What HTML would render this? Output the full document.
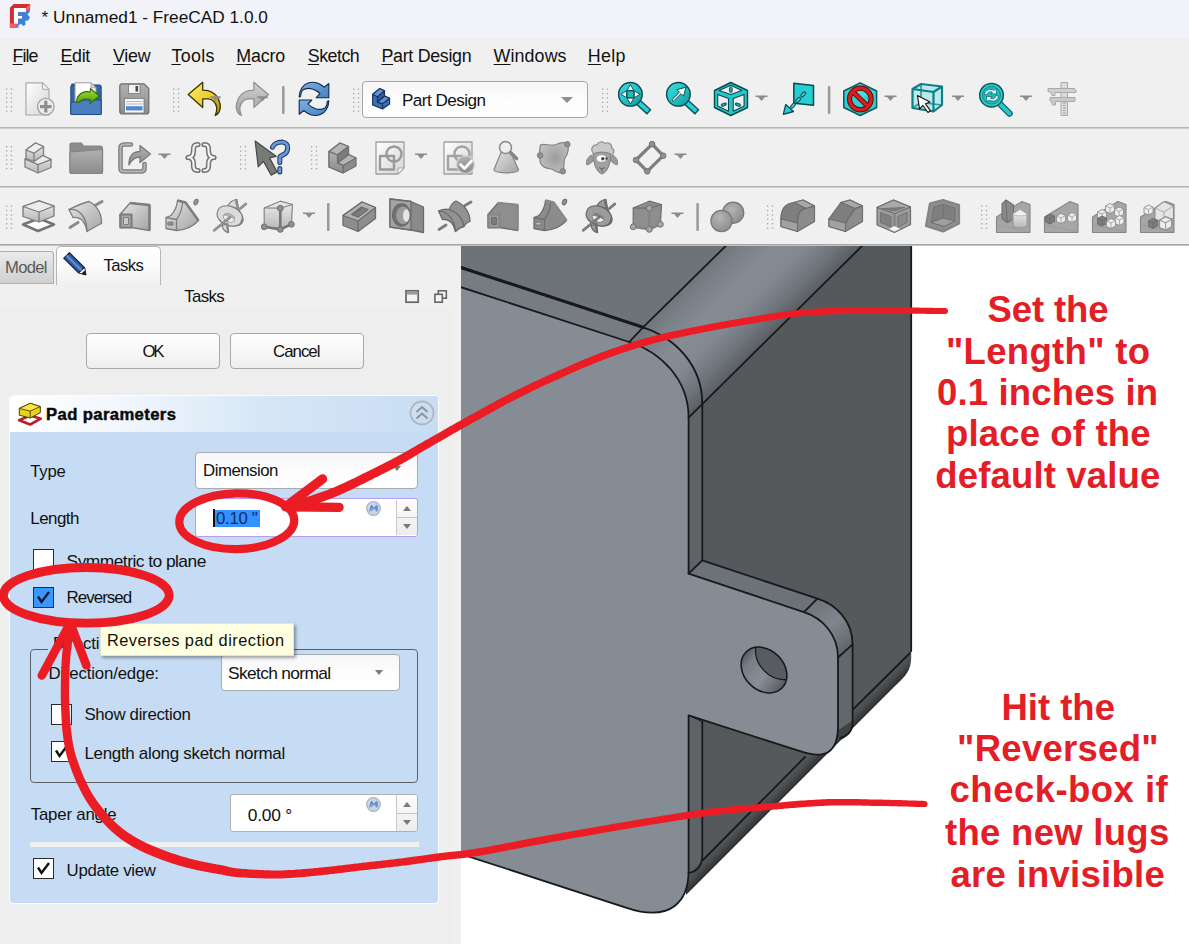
<!DOCTYPE html>
<html lang="en">
<head>
<meta charset="utf-8">
<title>* Unnamed1 - FreeCAD 1.0.0</title>
<style>
html,body{margin:0;padding:0;}
body{width:1189px;height:944px;position:relative;overflow:hidden;background:#f0f0f0;font-family:"Liberation Sans",sans-serif;color:#000;}
.abs{position:absolute;}
.t{position:absolute;white-space:nowrap;color:#111;}
.t u{text-decoration:underline;text-decoration-thickness:1.3px;text-underline-offset:2.2px;}
#titlebar{left:0;top:0;width:1189px;height:38px;background:#f1f3f9;}
#menubar{left:0;top:38px;width:1189px;height:38px;background:#f0f0f0;}
.hline{position:absolute;left:0;width:1189px;height:2px;background:linear-gradient(#b4b4b4,#b4b4b4 60%,#fafafa);}
.vsep{position:absolute;width:2px;height:30px;background:#9a9a9a;border-radius:1px;}
.combo{position:absolute;box-sizing:border-box;border:1px solid #adadad;border-radius:4px;background:linear-gradient(#f6f6f6,#fdfdfd 55%,#ffffff);}
.btn{position:absolute;box-sizing:border-box;border:1px solid #a9a9a9;border-radius:4px;background:linear-gradient(#fefefe,#f6f6f6 60%,#ededed);}
.cb{position:absolute;box-sizing:border-box;width:21px;height:21px;border:1.5px solid #2b2b2b;background:#fff;}
.spin{position:absolute;box-sizing:border-box;background:#fff;border:1px solid #b0b0b0;border-radius:3px;}
.dd{position:absolute;width:0;height:0;border-left:4px solid transparent;border-right:4px solid transparent;border-top:5px solid #7a7a7a;}
</style>
</head>
<body>

<svg class="abs" style="left:0;top:0" width="1189" height="944" viewBox="0 0 1189 944">
<defs>
<clipPath id="vclip"><rect x="461" y="246" width="728" height="698"/></clipPath>
<linearGradient id="gFillet" gradientUnits="userSpaceOnUse" x1="700" y1="270.3" x2="768" y2="338.3">
<stop offset="0" stop-color="#6f757b"/><stop offset="0.15" stop-color="#7a8087"/><stop offset="0.4" stop-color="#868c94"/><stop offset="0.62" stop-color="#828890"/><stop offset="0.85" stop-color="#6c7278"/><stop offset="1" stop-color="#5a5f63"/>
</linearGradient>
<linearGradient id="gBand" gradientUnits="userSpaceOnUse" x1="800" y1="763" x2="809" y2="772">
<stop offset="0" stop-color="#55595c"/><stop offset="0.5" stop-color="#45494c"/><stop offset="1" stop-color="#2c2f31"/>
</linearGradient>
<linearGradient id="gHole" gradientUnits="userSpaceOnUse" x1="741" y1="652" x2="788" y2="688" gradientTransform="rotate(-45 764 670)">
<stop offset="0" stop-color="#4a4e52"/><stop offset="0.22" stop-color="#787e85"/><stop offset="0.55" stop-color="#898f97"/><stop offset="0.82" stop-color="#666b70"/><stop offset="1" stop-color="#484c50"/>
</linearGradient>
<linearGradient id="gLugC" gradientUnits="userSpaceOnUse" x1="815" y1="605" x2="850" y2="650">
<stop offset="0" stop-color="#70767c"/><stop offset="0.45" stop-color="#7f858c"/><stop offset="1" stop-color="#5f6468"/>
</linearGradient>
<clipPath id="holeclip"><ellipse cx="764" cy="670" rx="25.4" ry="20" transform="rotate(45 764 670)"/></clipPath>
</defs>
<rect x="461" y="246" width="728" height="698" fill="#ffffff"/>
<g clip-path="url(#vclip)" stroke-linejoin="round" stroke-linecap="round">
<!-- right face + bottom band silhouette -->
<path d="M862,246 L911.2,246 L911.2,657 C911.2,670 906,676 895.5,685.5 L686,895 L688,404 Z" fill="url(#gBand)"/>
<path d="M862,246 L911.2,246 L911.2,651 L910,653 L703,860 L703,404 Z" fill="#55595c"/>
<!-- top face -->
<path d="M461,246 L725.7,246 L643,327.3 L461,267.5 Z" fill="#6d7378"/>
<!-- chamfer strip -->
<path d="M461,267.5 L643,327.3 L629.2,342 L461,287.2 Z" fill="#767c82"/>
<!-- fillet cylinder -->
<path d="M725.7,246 L862,246 L688.6,417.7 C688.6,380 662,352.7 629.2,342 L643,327.3 Z" fill="url(#gFillet)"/>
<!-- right vertical strip -->
<path d="M688.6,417.7 L702.3,403.8 L702.3,860 L688.6,875 Z" fill="#5e6367"/>
<!-- front face -->
<path d="M461,287.2 L629.2,342 C662,352.7 688.6,380 688.6,417.7 L688.6,573.7 L803.9,612.1 C822,618 838,634 838,657.5 L838,726 C838,752 826,760 800,751.2 L688.6,715.3 L688.6,871 C688.6,900 672,923 626.6,907.8 L461,854 Z" fill="#868c94"/>
<!-- lug top surface -->
<path d="M688.6,573.7 L803.9,612.1 L817.5,598.7 L702.3,560.4 Z" fill="#6c7277"/>
<!-- lug corner fillet -->
<path d="M803.9,612.1 C822,618 838,634 838,657.5 L852.6,644.3 C852.6,621 836,604.5 817.5,598.7 Z" fill="url(#gLugC)"/>
<!-- lug right strip -->
<path d="M838,657.5 L852.6,644.3 L852.6,720.4 L838,730.5 Z" fill="#62676b"/>
<path d="M838,730.500 L852.600,720.400 C852.600,729 849,735.500 841.500,739.500 L836,741 Z" fill="#3f4346"/>
<!-- hole -->
<ellipse cx="764" cy="670" rx="25.4" ry="20" transform="rotate(45 764 670)" fill="url(#gHole)"/>
<g clip-path="url(#holeclip)"><ellipse cx="778.4" cy="656.7" rx="25.4" ry="20" transform="rotate(45 778.4 656.7)" fill="#585c60" stroke="#16181a" stroke-width="1.3"/></g>
<ellipse cx="764" cy="670" rx="25.4" ry="20" transform="rotate(45 764 670)" fill="none" stroke="#16181a" stroke-width="1.5"/>
<!-- edges -->
<g fill="none" stroke="#17191b" stroke-width="1.8">
<path d="M461,267.5 L643,327.3" stroke-width="3.1"/>
<path d="M461,287.2 L629.2,342 C662,352.7 688.6,380 688.6,417.7 L688.6,573.7 L803.9,612.1 C822,618 838,634 838,657.5 L838,726 C838,752 826,760 800,751.2 L688.6,715.3 L688.6,871 C688.6,900 672,923 626.6,907.8 L461,854"/>
<path d="M629.2,342 L643,327.3 L725.7,246"/>
<path d="M643,327.3 C676,338 702.3,366 702.3,403.8 L702.3,560.4 L817.5,598.7 C836,604.5 852.6,621 852.6,644.3 L852.6,722 C852.6,731 848,736 840,738"/>
<path d="M688.6,417.7 L862,246"/>
<path d="M803.9,612.1 L817.5,598.7"/>
<path d="M838,657.5 L852.6,644.3"/>
<path d="M688.6,573.7 L702.3,560.4"/>
<path d="M702.3,721.6 L702.3,856 C702.3,866 696,872 688.6,873"/>
<path d="M702.3,721.6 L688.6,715.3" stroke-width="1"/>
<path d="M703,860 L805,757"/>
<path d="M853.5,709 L910,653"/>
<path d="M911.2,246 L911.2,651"/>
</g>
</g>
</svg>

<div id="titlebar" class="abs"></div>
<div id="menubar" class="abs"></div>
<!-- toolbar separators -->
<div class="hline" style="top:127px"></div>
<div class="hline" style="top:186px"></div>
<div class="hline" style="top:244px;height:2px;background:linear-gradient(#a8a8a8,#a8a8a8 55%,#e0e0e0)"></div>

<!-- workbench combobox -->
<div class="combo" style="left:362px;top:81px;width:226px;height:37px;border-color:#a6a6a6"></div>
<div class="dd" style="left:561px;top:97px;border-left-width:6px;border-right-width:6px;border-top:6px solid #8e8e8e"></div>

<!-- left panel -->
<div class="abs" style="left:0;top:246px;width:461px;height:698px;background:#f0f0f0"></div>
<div class="abs" style="left:0;top:308px;width:452px;height:636px;background:#eeeeee"></div>
<!-- tabs -->
<div class="abs" style="left:-2px;top:251px;width:56px;height:33px;box-sizing:border-box;border:1px solid #adadad;border-bottom:1.5px solid #b0b0b0;border-radius:4px 4px 0 0;background:linear-gradient(#ebebeb,#dcdcdc 50%,#d0d0d0)"></div>
<div class="abs" style="left:56px;top:246px;width:105px;height:39px;box-sizing:border-box;border:1px solid #b6b6b6;border-bottom:none;border-radius:5px 5px 0 0;background:linear-gradient(#ffffff,#fbfbfb 50%,#f0f0f0)"></div>
<!-- buttons -->
<div class="btn" style="left:86px;top:333px;width:134px;height:36px"></div>
<div class="btn" style="left:230px;top:333px;width:134px;height:36px"></div>

<!-- pad parameters box -->
<div class="abs" style="left:9px;top:395px;width:430px;height:509px;box-sizing:border-box;border:1px solid #fbfdff;border-radius:4px;background:#c6dcf4"></div>
<div class="abs" style="left:10px;top:396px;width:428px;height:36px;border-radius:3px 3px 0 0;background:linear-gradient(90deg,#ffffff,#f2f7fd 25%,#d6e6f7 60%,#c8ddf4)"></div>
<!-- collapse icon -->
<svg class="abs" style="left:408px;top:399px" width="28" height="28" viewBox="0 0 28 28"><circle cx="14" cy="14" r="11.5" fill="none" stroke="#b3b7bb" stroke-width="1.8"/><path d="M8.5,13 L14,8 L19.5,13 M8.5,19.5 L14,14.5 L19.5,19.5" fill="none" stroke="#8f9397" stroke-width="2"/></svg>

<!-- Type combobox -->
<div class="combo" style="left:195px;top:452px;width:223px;height:37px;border-color:#a8acb2"></div>
<div class="dd" style="left:393px;top:466px"></div>
<!-- Length spin -->
<div class="spin" style="left:195px;top:498px;width:223px;height:39px;border:1.5px solid #b89cf0"></div>
<div class="abs" style="left:396px;top:500px;width:1px;height:35px;background:#c8c8c8"></div>
<div class="abs" style="left:397px;top:500px;width:20px;height:35px;background:linear-gradient(#fdfdfd,#ececec);border-radius:0 2px 2px 0"></div>
<div class="abs" style="left:397px;top:517px;width:20px;height:1px;background:#c4c4c4"></div>
<div class="dd" style="left:403px;top:506px;border-top:none;border-bottom:5px solid #7a7a7a"></div>
<div class="dd" style="left:403px;top:524px"></div>
<div class="abs" style="left:214px;top:509.5px;width:46px;height:17.5px;background:#3392ff"></div>
<div class="abs" style="left:213px;top:509px;width:1.5px;height:18px;background:#111"></div>
<svg class="abs" style="left:365px;top:500px" width="17" height="17" viewBox="0 0 17 17"><circle cx="8.5" cy="8.5" r="6.8" fill="#c9d6ea" stroke="#a9b1bd" stroke-width="1.2"/><path d="M4.5,11.5 L6.5,5.5 M7,11 L7,6 L9,9 L11,6 L11,11 M12.2,5.5 L12.2,11.5" fill="none" stroke="#5f86c4" stroke-width="1.1"/></svg>

<!-- checkboxes -->
<div class="cb" style="left:33px;top:549px"></div>
<div class="cb" style="left:33px;top:586.5px;background:#3a97ff"></div>
<svg class="abs" style="left:33px;top:586.5px" width="21" height="21" viewBox="0 0 21 21"><path d="M5,9.5 L8.5,15 L16,5" fill="none" stroke="#0d1a33" stroke-width="2.4"/></svg>

<!-- groupbox -->
<div class="abs" style="left:30px;top:649px;width:388px;height:134px;box-sizing:border-box;border:1.3px solid #5c6066;border-radius:4px"></div>
<div class="abs" style="left:48px;top:640px;width:60px;height:18px;background:#c6dcf4"></div>
<div class="combo" style="left:221px;top:654px;width:179px;height:37px;border-color:#a8acb2"></div>
<div class="dd" style="left:375px;top:670px"></div>
<div class="cb" style="left:51px;top:703.5px"></div>
<div class="cb" style="left:51px;top:741px"></div>
<svg class="abs" style="left:51px;top:741px" width="21" height="21" viewBox="0 0 21 21"><path d="M5,9.5 L8.5,15 L16,5" fill="none" stroke="#111" stroke-width="2.4"/></svg>

<!-- taper spin -->
<div class="spin" style="left:230px;top:794px;width:188px;height:38px"></div>
<div class="abs" style="left:396px;top:795px;width:1px;height:36px;background:#c8c8c8"></div>
<div class="abs" style="left:397px;top:795px;width:20px;height:36px;background:linear-gradient(#fdfdfd,#ececec);border-radius:0 2px 2px 0"></div>
<div class="abs" style="left:397px;top:813px;width:20px;height:1px;background:#c4c4c4"></div>
<div class="dd" style="left:403px;top:802px;border-top:none;border-bottom:5px solid #7a7a7a"></div>
<div class="dd" style="left:403px;top:820px"></div>
<svg class="abs" style="left:365px;top:796px" width="17" height="17" viewBox="0 0 17 17"><circle cx="8.5" cy="8.5" r="6.8" fill="#c9d6ea" stroke="#a9b1bd" stroke-width="1.2"/><path d="M4.5,11.5 L6.5,5.5 M7,11 L7,6 L9,9 L11,6 L11,11 M12.2,5.5 L12.2,11.5" fill="none" stroke="#5f86c4" stroke-width="1.1"/></svg>
<!-- separator -->
<div class="abs" style="left:30px;top:842px;width:389px;height:4.5px;background:#eef0f2"></div>
<!-- update view -->
<div class="cb" style="left:33px;top:858px"></div>
<svg class="abs" style="left:33px;top:858px" width="21" height="21" viewBox="0 0 21 21"><path d="M5,9.5 L8.5,15 L16,5" fill="none" stroke="#111" stroke-width="2.4"/></svg>

<!-- tooltip -->
<div class="abs" style="left:100px;top:623px;width:194px;height:33px;box-sizing:border-box;background:#ffffe1;border:1px solid #e6e6cf;box-shadow:2px 2px 3px rgba(0,0,0,0.35);z-index:5"></div>

<!-- panel title icons -->
<svg class="abs" style="left:404px;top:289px" width="16" height="15" viewBox="0 0 16 15"><rect x="2" y="1.800" width="12.200" height="11.400" fill="#f4f4f4" stroke="#666" stroke-width="1.700"/><rect x="2.800" y="3" width="10.600" height="2.600" fill="#9a9a9a"/></svg>
<svg class="abs" style="left:433px;top:289px" width="16" height="15" viewBox="0 0 16 15"><rect x="5.300" y="1.800" width="8" height="7.400" fill="#f4f4f4" stroke="#666" stroke-width="1.600"/><rect x="1.900" y="5.300" width="7.400" height="7.900" fill="#f4f4f4" stroke="#666" stroke-width="1.600"/></svg>
<!-- pencil icon -->
<svg class="abs" style="left:62px;top:251px" width="26" height="26" viewBox="0 0 26 26"><path d="M1.8,7.100 L7.400,1.800 L22.800,17 L24,24 L16.700,22 Z" fill="#ffffff" stroke="#16284a" stroke-width="1" stroke-linejoin="round"/><path d="M1.800,7.100 L7.400,1.800 L22.300,16.500 L16.700,21.800 Z" fill="#2f5d9f" stroke="#16284a" stroke-width="1.200" stroke-linejoin="round"/><path d="M4.600,4.500 L19.500,19.200" stroke="#5e8fd6" stroke-width="2.200"/><path d="M21,20.800 L23.300,19.700 L24,24 L19.800,23 Z" fill="#1a1a1a"/></svg>
<!-- pad icon -->
<svg class="abs" style="left:18px;top:402px" width="24" height="24" viewBox="0 0 24 24"><path d="M1.100,18.200 L12.200,13.600 L22.800,16.700 L12.200,22.500 Z" fill="#ffffff" stroke="#b81f28" stroke-width="2.600" stroke-linejoin="round"/><path d="M1.300,6.400 L12.200,1.300 L22.300,4.600 L22.300,10.700 L12.200,16 L1.300,13.200 Z" fill="#e9d21f" stroke="#4a4200" stroke-width="1" stroke-linejoin="round"/><path d="M1.300,6.400 L12.200,1.300 L22.300,4.600 L12.200,9.100 Z" fill="#f7e83a" stroke="#4a4200" stroke-width="0.900" stroke-linejoin="round"/><path d="M12.200,9.100 L12.200,16" stroke="#4a4200" stroke-width="0.900"/></svg>

<svg class="abs" style="left:0;top:0;z-index:2" width="1189" height="246" viewBox="0 0 1189 246">
<defs>
<linearGradient id="gg" x1="0" y1="0" x2="0" y2="1"><stop offset="0" stop-color="#ededed"/><stop offset="1" stop-color="#b8b8b8"/></linearGradient>
<linearGradient id="gg2" x1="0" y1="0" x2="1" y2="1"><stop offset="0" stop-color="#e6e6e6"/><stop offset="1" stop-color="#a4a4a4"/></linearGradient>
<linearGradient id="gd" x1="0" y1="0" x2="0" y2="1"><stop offset="0" stop-color="#b0b0b0"/><stop offset="1" stop-color="#8c8c8c"/></linearGradient>
<linearGradient id="gpage" x1="0" y1="0" x2="1" y2="1"><stop offset="0" stop-color="#ffffff"/><stop offset="1" stop-color="#d4d4d4"/></linearGradient>
<linearGradient id="gteal" x1="0" y1="0" x2="1" y2="1"><stop offset="0" stop-color="#34e0e2"/><stop offset="1" stop-color="#16b4b8"/></linearGradient>
<linearGradient id="gyel" x1="0" y1="0" x2="1" y2="1"><stop offset="0" stop-color="#fff06a"/><stop offset="0.6" stop-color="#e6c829"/><stop offset="1" stop-color="#a58a10"/></linearGradient>
<linearGradient id="gblue" x1="0" y1="0" x2="1" y2="1"><stop offset="0" stop-color="#7fb0e4"/><stop offset="1" stop-color="#4480c4"/></linearGradient>
<linearGradient id="ggreen" x1="0" y1="0" x2="0" y2="1"><stop offset="0" stop-color="#a6e33c"/><stop offset="1" stop-color="#4e9a06"/></linearGradient>
<g id="grip"><g fill="#a3a3a3"><rect x="0" y="0" width="1.3" height="1.3"/><rect x="0" y="4.4" width="1.3" height="1.3"/><rect x="0" y="8.8" width="1.3" height="1.3"/><rect x="0" y="13.2" width="1.3" height="1.3"/><rect x="0" y="17.6" width="1.3" height="1.3"/><rect x="0" y="22" width="1.3" height="1.3"/><rect x="4.8" y="0" width="1.3" height="1.3"/><rect x="4.8" y="4.4" width="1.3" height="1.3"/><rect x="4.8" y="8.8" width="1.3" height="1.3"/><rect x="4.8" y="13.2" width="1.3" height="1.3"/><rect x="4.8" y="17.6" width="1.3" height="1.3"/><rect x="4.8" y="22" width="1.3" height="1.3"/></g></g>
<g id="ddarrow"><path d="M0,0 L12,0 L12,1.600 L9.400,1.600 L6,5.600 L2.600,1.600 L0,1.600 Z" fill="#8c8c8c"/></g>
<g id="vs"><rect x="0" y="0" width="2.6" height="28" rx="1" fill="#9c9c9c"/></g>
<g id="cbD"><path d="M0,3 L4.500,0.500 L9,2.500 L9,8 L4.500,10.500 L0,8.500 Z" fill="#7d7d7d" stroke="#6a6a6a" stroke-width="0.900"/><path d="M0,3 L4.500,5 L9,2.500 M4.500,5 L4.500,10.500" fill="none" stroke="#6a6a6a" stroke-width="0.800"/></g>
<g id="cbL"><path d="M0,3 L4.500,0.500 L9,2.500 L9,8 L4.500,10.500 L0,8.500 Z" fill="#ededed" stroke="#8f8f8f" stroke-width="0.900"/><path d="M0,3 L4.500,5 L9,2.500 M4.500,5 L4.500,10.500" fill="none" stroke="#9a9a9a" stroke-width="0.800"/></g>
<linearGradient id="gd2" x1="0" y1="0" x2="0" y2="1"><stop offset="0" stop-color="#d0d0d0"/><stop offset="1" stop-color="#a0a0a0"/></linearGradient>
<linearGradient id="gteal2" x1="0" y1="0" x2="1" y2="1"><stop offset="0" stop-color="#3fdde0"/><stop offset="0.5" stop-color="#25c3c8"/><stop offset="1" stop-color="#149499"/></linearGradient>
</defs>

<!-- FreeCAD logo -->
<g>
<path d="M9.9,7.700 L13.700,4.100 L30.100,4.100 L30.100,9.500 L26,12.500 L18,24 L15.500,27.700 L9.900,27.700 Z" fill="#d52b34"/>
<path d="M26,8.100 L30.100,4.100 L30.100,9.500 L26,12.500 Z" fill="#ff5a5a"/>
<path d="M9.900,23 L13.900,23.700 L18,23.700 L15.500,27.700 L9.900,27.700 Z" fill="#ff5a5a"/>
<path d="M13.900,8.100 L26,8.100 L26,12.250 L18,12.250 L18,15.850 L22,15.850 L22,18.700 L18,18.700 L18,23.750 L13.900,23.750 Z" fill="#ffffff"/>
<path d="M18,12.250 L26,12.250 L26.300,10.800 L30.100,8.600 L29.700,11.900 L27.400,14.400 L29.900,17.300 L28.500,20.200 L25.200,20.900 L25.600,24.500 L23.400,25.900 L20.900,23.800 L18.400,25.200 L18.400,27.700 L15.200,27.700 L18,23.750 L18,18.700 L22,18.700 L22,15.850 L18,15.850 Z" fill="#3b82d8"/>
</g>

<!-- ===== Row 1 ===== -->
<use href="#grip" x="6" y="88.5"/>
<!-- new doc -->
<g transform="translate(25,82)">
<path d="M1,0.8 L17.5,0.8 L24,7.3 L24,33 L1,33 Z" fill="url(#gpage)" stroke="#a9a9a9" stroke-width="1.2"/>
<path d="M17.5,0.8 L17.5,7.3 L24,7.3 Z" fill="#f4f4f4" stroke="#a9a9a9" stroke-width="1"/>
<circle cx="20.8" cy="24.6" r="8.3" fill="#ececec" stroke="#a2a2a2" stroke-width="1.3"/>
<path d="M20.8,18.8 L20.8,30.4 M15,24.6 L26.6,24.6" stroke="#8e8e8e" stroke-width="3.2" fill="none"/>
</g>
<!-- open -->
<g transform="translate(70,82)">
<path d="M1,4 L8,4 L9,1.5 L1.5,1.5 Z" fill="#2f5c99"/>
<rect x="0.8" y="3" width="30.4" height="29.5" rx="1.5" fill="#3465a4" stroke="#204a87" stroke-width="1"/>
<path d="M5,0.8 L21,0.8 L26,5.8 L26,22 L5,22 Z" fill="#ffffff" stroke="#9a9a9a" stroke-width="1"/>
<path d="M21,0.8 L21,5.8 L26,5.8 Z" fill="#d8d8d8" stroke="#9a9a9a" stroke-width="0.8"/>
<path d="M0.8,32.5 L0.8,20 L10,20 L12,18 L31.2,18 L31.2,32.5 Z" fill="#4a7fc0" stroke="#204a87" stroke-width="1"/>
<path d="M6.5,20 C7,12 13,8.5 20,10 L20.5,6.5 L29.5,14 L20,21.5 L20.2,17.5 C15,16.5 11,18 9.5,20.5 Z" fill="url(#ggreen)" stroke="#2f6b06" stroke-width="1.1"/>
</g>
<!-- save -->
<g transform="translate(119,83)">
<path d="M3,0.8 L25,0.8 L29.8,5.6 L29.8,28.5 Q29.8,31 27.3,31 L3,31 Q0.8,31 0.8,28.5 L0.8,3 Q0.8,0.8 3,0.8 Z" fill="url(#gd)" stroke="#6c6c6c" stroke-width="1.2"/>
<rect x="9.5" y="1.5" width="11.5" height="9" fill="#f2f2f2" stroke="#777" stroke-width="0.8"/>
<rect x="16.5" y="3" width="2.6" height="5.6" fill="#4a4a4a"/>
<rect x="5.5" y="15.5" width="19.5" height="14.5" fill="#f6f6f6" stroke="#777" stroke-width="0.8"/>
<path d="M7,18.5 L23.5,18.5 M7,21 L23.5,21" stroke="#b8b8b8" stroke-width="1"/>
<rect x="7" y="23.2" width="16.5" height="4.2" fill="#4f88cc"/>
</g>
<use href="#grip" x="173" y="88.5"/>
<!-- undo -->
<g transform="translate(187,81)">
<path d="M1.2,13.6 L15.7,1.3 L15.7,9.2 C20,9.2 23,10 25,11.2 C28.5,13.2 30.5,15.8 31.4,17.9 C32.8,21 33.5,24 33.3,26.6 C33,30 31,33 28.2,34.5 C29.5,31.5 30,29 29.8,26.6 C29.5,24 28.2,21.8 26.6,20.3 C25,18.8 23,17.9 21.1,17.9 L15.7,17.9 L15.7,26.6 Z" fill="url(#gyel)" stroke="#3a3200" stroke-width="1.3" stroke-linejoin="round"/>
<path d="M23.500,15.200 L33.700,15.200 L33.700,17.200 L31.400,17.200 L28.600,20.200 L25.800,17.200 L23.500,17.200 Z" fill="#8e8e8e"/>
</g>
<!-- redo -->
<g transform="translate(235,81)">
<path d="M33.4,13.6 L18.9,1.3 L18.9,9.2 C14.6,9.2 11.6,10.0 9.6,11.2 C6.1,13.2 4.1,15.8 3.2,17.9 C1.8,21.0 1.1,24.0 1.3,26.6 C1.6,30.0 3.6,33.0 6.4,34.5 C5.1,31.5 4.6,29.0 4.8,26.6 C5.1,24.0 6.4,21.8 8.0,20.3 C9.6,18.8 11.6,17.9 13.5,17.9 L18.9,17.9 L18.9,26.6 Z" fill="url(#gd2)" stroke="#929292" stroke-width="1.3" stroke-linejoin="round"/>
<path d="M22.500,15.200 L32.700,15.200 L32.700,17.200 L30.400,17.200 L27.600,20.200 L24.800,17.200 L22.500,17.200 Z" fill="#8e8e8e"/>
</g>
<use href="#vs" x="282" y="86"/>
<!-- refresh -->
<g transform="translate(298,81)" stroke="#10284a" stroke-width="1.1" stroke-linejoin="round" fill="url(#gblue)">
<path d="M1.200,16 C1.300,9 5,3.500 10,2 C14.500,0.600 19,1.500 22,3.200 C23.800,4.200 25,5.200 26.200,6.200 L30.800,2.500 L30.800,16.700 L18.200,16.700 L22,12.700 C20,10.500 17.500,9 14.500,8 C11,7 7,7.500 4.700,9 C3,11 2.800,13.500 2.600,15.500 Z"/>
<path d="M30.800,19.700 C30.700,26.700 27,32.200 22,33.700 C17.500,35.100 13,34.200 10,32.500 C8.200,31.500 7,30.500 5.800,29.500 L1.200,33.200 L1.200,19 L13.800,19 L10,23 C12,25.200 14.500,26.700 17.500,27.700 C21,28.700 25,28.200 27.300,26.700 C29,24.700 29.200,22.200 29.400,20.200 Z"/>
</g>
<use href="#grip" x="353" y="88.5"/>
<!-- part design icon in combo -->
<g transform="translate(372,88)" stroke="#1b3358" stroke-width="1.1" stroke-linejoin="round">
<path d="M0.6,6.5 L7.5,0.6 L12.5,2.8 L12.5,8 L17.6,10.2 L17.6,16 L10.5,21 L0.6,17 Z" fill="#3b6eb3"/>
<path d="M0.6,6.500 L7.500,0.600 L12.500,2.800 L5.500,8.800 Z" fill="#5f93d3"/>
<path d="M5.5,14.200 L12.500,8 L17.600,10.200 L10.500,15.800 Z" fill="#5f93d3"/>
<path d="M5.5,8.800 L5.5,14.200 L10.500,15.800 L10.500,21" fill="none"/>
<path d="M5.5,8.8 L12.500,2.800 L12.500,8 L5.500,14.200 Z" fill="#2f5c9c"/>
</g>
<use href="#grip" x="602" y="88.5"/>

<!-- zoom fit -->
<g transform="translate(618,81)">
<path d="M19.500,20.500 L31.200,31.200" stroke="#0a4a4e" stroke-width="6.600"/>
<path d="M19.500,20.500 L30.300,30.300" stroke="#2bd0d4" stroke-width="4"/>
<circle cx="12.400" cy="13.300" r="11.800" fill="url(#gteal2)" stroke="#0a4a4e" stroke-width="1.400"/>
<path d="M12.400,3.600 L15.800,9.500 L9,9.500 Z M12.400,23 L15.800,17.100 L9,17.100 Z M2.800,13.300 L8.600,9.900 L8.600,16.700 Z M22,13.300 L16.200,9.900 L16.200,16.700 Z" fill="#ffffff" stroke="#0a4a4e" stroke-width="0.900" stroke-linejoin="round"/>
<rect x="9" y="9.900" width="6.800" height="6.800" fill="#22b8bc" stroke="#0a4a4e" stroke-width="0.900"/>
</g>
<!-- zoom selection -->
<g transform="translate(666,81)">
<path d="M19.500,20.500 L31.200,31.200" stroke="#0a4a4e" stroke-width="6.600"/>
<path d="M19.500,20.500 L30.300,30.300" stroke="#2bd0d4" stroke-width="4"/>
<circle cx="12.400" cy="13.300" r="11.800" fill="url(#gteal2)" stroke="#0a4a4e" stroke-width="1.400"/>
<path d="M5.800,18.800 L13.500,11.200 L11,8.700 L20,6.200 L17.500,15.200 L15,12.700 L7.300,20.300 Z" fill="#ffffff" stroke="#0a4a4e" stroke-width="1" stroke-linejoin="round"/>
</g>
<!-- iso cube -->
<g transform="translate(714,82)" stroke="#0a4a4e" stroke-linejoin="round">
<path d="M16.800,0.500 L33.500,8.500 L33.500,25.500 L16.800,33.500 L0.500,25.500 L0.500,8.500 Z" fill="#27c6ca" stroke-width="1.400"/>
<path d="M16.800,3.300 L27.800,8.400 L16.800,12.500 L5.100,8.400 Z" fill="#f0f0f0" stroke-width="1.100"/>
<path d="M3.700,12.400 L14.500,16.600 L14.500,29.300 L3.700,24.100 Z" fill="#f0f0f0" stroke-width="1.100"/>
<path d="M19.200,16.600 L30.100,12.400 L30.100,24.100 L19.200,29.300 Z" fill="#f0f0f0" stroke-width="1.100"/>
<ellipse cx="16.800" cy="7.700" rx="1.500" ry="2.900" fill="#1fa9ad" stroke-width="0.900"/>
<ellipse cx="9.800" cy="22.600" rx="2.700" ry="1.300" transform="rotate(-22 9.800 22.600)" fill="#1fa9ad" stroke-width="0.900"/>
<ellipse cx="23.900" cy="22.600" rx="2.700" ry="1.300" transform="rotate(22 23.900 22.600)" fill="#1fa9ad" stroke-width="0.900"/>
</g>
<use href="#ddarrow" x="755.5" y="95.5"/>
<!-- arrow plane -->
<g transform="translate(782,82)" stroke="#0a4a4e" stroke-linejoin="round">
<path d="M11.800,1.200 L31.500,3.600 L31.500,23.200 L11.800,21.300 Z" fill="#27cdd2" stroke-width="1.500"/>
<path d="M22.300,11.300 L8,26.800" stroke-width="3.800" stroke-dasharray="3 4.600" stroke-linecap="round" fill="none"/>
<path d="M22.300,11.300 L8,26.800" stroke="#4fe0e3" stroke-width="1.600" stroke-dasharray="3 4.600" stroke-linecap="round" fill="none"/>
<path d="M1.300,32.400 L3.700,22.600 L11.500,29.500 Z" fill="#27cdd2" stroke-width="1.300"/>
</g>
<use href="#vs" x="827.8" y="86"/>
<!-- no entry hex -->
<g transform="translate(843,82)">
<path d="M17.200,0.800 L33.600,9 L33.600,25.500 L17.200,33.500 L0.800,25.500 L0.800,9 Z" fill="#2fd0d4" stroke="#0b5a5e" stroke-width="1.500" stroke-linejoin="round"/>
<path d="M17.200,3 L31.600,10.200 L17.200,17 L2.800,10.200 Z" fill="#5fe3e5" opacity="0.6"/>
<circle cx="17.300" cy="17" r="10.800" fill="none" stroke="#5c0a0a" stroke-width="5.200"/>
<path d="M9.600,9.500 L25,24.500" stroke="#5c0a0a" stroke-width="5.200"/>
<circle cx="17.300" cy="17" r="10.800" fill="none" stroke="#d91e1e" stroke-width="3.200"/>
<path d="M9.600,9.500 L25,24.500" stroke="#d91e1e" stroke-width="3.200"/>
</g>
<use href="#ddarrow" x="884.5" y="95.500"/>
<!-- wire cube with cursor -->
<g transform="translate(911,82)" stroke-linejoin="round">
<path d="M1.500,7 L10,2 L31,4.500 L31,23 L22.500,29.500 L1.500,26 Z" fill="#8fe6e8" opacity="0.55"/>
<g fill="none" stroke="#0f7f84" stroke-width="2.200">
<path d="M1.500,7 L22.500,10 L22.500,29.500 L1.500,26 Z"/><path d="M1.500,7 L10,2 L31,4.500 L22.500,10"/><path d="M31,4.500 L31,23 L22.500,29.500"/><path d="M10,2 L10,20.500 L1.500,26 M10,20.500 L31,23" stroke-width="1.600" opacity="0.8"/>
</g>
<path d="M6.500,13.500 L19,20 L14.500,21.800 L19.500,28.800 L17,30.500 L12,23.500 L8.500,27 Z" fill="#ffffff" stroke="#1a1a1a" stroke-width="1.200"/>
</g>
<use href="#ddarrow" x="952" y="95.500"/>
<!-- zoom refresh -->
<g transform="translate(977,81)">
<path d="M22,22 L32.500,32.500" stroke="#0b5a5e" stroke-width="6.400" stroke-linecap="round"/>
<path d="M22,22 L32.500,32.500" stroke="#2cc6ca" stroke-width="4" stroke-linecap="round"/>
<circle cx="14.500" cy="14.200" r="11.800" fill="#2fd0d4" stroke="#0b5a5e" stroke-width="1.500"/>
<circle cx="14.500" cy="14.200" r="9" fill="#22b9bd" stroke="#11898d" stroke-width="1"/>
<path d="M7.500,13.500 C8,9 13,7 17,9.500 L19,7.500 L19.500,13 L14,12.800 L15.500,11.200 C13,10 10.500,11 10.200,13.800 Z" fill="#e9fdfd" stroke="#0b5a5e" stroke-width="0.700"/>
<path d="M21.500,15 C21,19.500 16,21.500 12,19 L10,21 L9.500,15.500 L15,15.700 L13.500,17.300 C16,18.500 18.500,17.500 18.800,14.700 Z" fill="#e9fdfd" stroke="#0b5a5e" stroke-width="0.700"/>
</g>
<use href="#ddarrow" x="1020" y="95.500"/>
<!-- caliper -->
<g transform="translate(1047,82)" fill="#d6d6d6" stroke="#a9a9a9" stroke-width="1" stroke-linejoin="round">
<path d="M14,0.500 L20.500,0.500 L20.500,33.500 L14,33.500 Z" fill="#dcdcdc"/>
<path d="M1,6.500 L27.500,6.500 L29,8.500 L29,10.500 L20.500,10.500 L14,10.500 L8,10.500 L8,13.500 L5,13.500 L4,10.500 L1,9.500 Z" fill="#cfcfcf"/>
<path d="M3,15.500 L28,15.500 L28,19.500 L14,19.500 L8.500,19.500 L8.500,23 L5.500,23 L4.500,19.500 L3,19 Z" fill="#c8c8c8"/>
<path d="M16,21 L19,21 M16,23.500 L18,23.500 M16,26 L19,26 M16,28.500 L18,28.500 M16,31 L19,31" stroke="#8f8f8f" stroke-width="0.800" fill="none"/>
</g>

<!-- ===== Row 2 ===== -->
<use href="#grip" x="6" y="146"/>
<!-- part (stacked boxes) -->
<g transform="translate(24,142)" stroke="#7d7d7d" stroke-width="1.3" stroke-linejoin="round">
<path d="M1,17 L14,11 L27,17.500 L27,25.500 L14,31 L1,25 Z" fill="url(#gg)"/>
<path d="M1,17 L14,22.500 L27,17.500 M14,22.500 L14,31" fill="none"/>
<path d="M1,17 L14,11 L27,17.500 L14,22.500 Z" fill="#ececec"/>
<path d="M2,8 L11.500,1 L19.500,4.500 L19.500,13 L10,19.500 L2,16.500 Z" fill="url(#gg)"/>
<path d="M2,8 L11.500,1 L19.500,4.500 L10,11.200 Z" fill="#efefef"/>
<path d="M10,11.200 L10,19.500" fill="none"/>
</g>
<!-- folder -->
<g transform="translate(69,142)" stroke="#848484" stroke-width="1.200" stroke-linejoin="round">
<path d="M1,3 Q1,1 3,1 L12.500,1 L14.500,4 L31,4 Q33.500,4 33.500,6.500 L33.500,29.500 Q33.500,31.500 31.500,31.500 L3,31.500 Q1,31.500 1,29.500 Z" fill="#8c8c8c"/>
<path d="M1,10 L33.500,7.500 L33.500,29.500 Q33.500,31.500 31.500,31.500 L3,31.500 Q1,31.500 1,29.500 Z" fill="url(#gd)"/>
</g>
<!-- export -->
<g transform="translate(118,142)" stroke-linejoin="round" stroke-linecap="round">
<path d="M13,2.500 L6,2.500 Q2.500,2.500 2.500,6 L2.500,26 Q2.500,29.500 6,29.500 L23,29.500 Q26.500,29.500 26.500,26 L26.500,22" fill="none" stroke="#7c7c7c" stroke-width="4.600"/>
<path d="M13,2.500 L6,2.500 Q2.500,2.500 2.500,6 L2.500,26 Q2.500,29.500 6,29.500 L23,29.500 Q26.500,29.500 26.500,26 L26.500,22" fill="none" stroke="#b4b4b4" stroke-width="2"/>
<path d="M11,23 C10.500,14 15,9.500 22,9.500 L22,3.500 L32.500,12 L22,20.500 L22,15 C17,15 13.500,17.500 11,23 Z" fill="url(#gd)" stroke="#7c7c7c" stroke-width="1.300"/>
</g>
<use href="#ddarrow" x="158.500" y="153.500"/>
<!-- braces -->
<g transform="translate(185,142)" fill="none" stroke-linecap="round" stroke-linejoin="round">
<path d="M13,2.500 C8,2.500 8.500,6 8.500,9 C8.500,13 7,15.500 3,15.500 C7,15.500 8.500,18 8.500,22 C8.500,25 8,28.500 13,28.500" stroke="#727272" stroke-width="5.200"/>
<path d="M19,2.500 C24,2.500 23.500,6 23.500,9 C23.500,13 25,15.500 29,15.500 C25,15.500 23.500,18 23.500,22 C23.500,25 24,28.500 19,28.500" stroke="#727272" stroke-width="5.200"/>
<path d="M13,2.500 C8,2.500 8.500,6 8.500,9 C8.500,13 7,15.500 3,15.500 C7,15.500 8.500,18 8.500,22 C8.500,25 8,28.500 13,28.500" stroke="#f4f4f4" stroke-width="2.200"/>
<path d="M19,2.500 C24,2.500 23.500,6 23.500,9 C23.500,13 25,15.500 29,15.500 C25,15.500 23.500,18 23.500,22 C23.500,25 24,28.500 19,28.500" stroke="#f4f4f4" stroke-width="2.200"/>
</g>
<use href="#grip" x="240" y="146"/>
<!-- whats this cursor -->
<g transform="translate(255,141)" stroke-linejoin="round" stroke-linecap="round">
<path d="M0.200,0.100 L21.100,15.300 L14.600,16.900 L22,30.900 L16.200,34.100 L8.500,20.400 L3.200,25.800 Z" fill="#787a76" stroke="#474946" stroke-width="1.200"/>
<path d="M17.400,6.200 C18.600,3.200 22.500,0.900 27.600,1.100 C31,1.600 33,4 32.700,7 C32.500,10 31,12.500 28.600,13.600 C26.500,14.600 24.800,15 24.800,16.500 L24.800,21.600" fill="none" stroke="#1f3d6b" stroke-width="5"/>
<path d="M17.400,6.200 C18.600,3.200 22.500,0.900 27.600,1.100 C31,1.600 33,4 32.700,7 C32.500,10 31,12.500 28.600,13.600 C26.500,14.600 24.800,15 24.800,16.500 L24.800,21.600" fill="none" stroke="#6b9cd9" stroke-width="2.800"/>
<path d="M24.800,27.600 L24.800,30.900" stroke="#1f3d6b" stroke-width="5"/>
<path d="M24.800,27.600 L24.800,30.900" stroke="#6b9cd9" stroke-width="2.800"/>
</g>
<use href="#grip" x="311" y="146"/>
<!-- body -->
<g transform="translate(328,142)" stroke="#6f6f6f" stroke-width="1.200" stroke-linejoin="round">
<path d="M1,9.500 L12,1 L20.500,4.500 L20.500,12.500 L28,16 L28,24 L15,31 L1,25 Z" fill="#8b8b8b"/>
<path d="M1,9.500 L12,1 L20.500,4.500 L9.500,13 Z" fill="#b5b5b5"/>
<path d="M9.500,21 L20.500,12.500 L28,16 L15,23.500 Z" fill="#b5b5b5"/>
<path d="M9.500,13 L20.500,4.500 L20.500,12.500 L9.500,21 Z" fill="#7c7c7c"/>
<path d="M9.500,13 L9.500,21 L15,23.500 L15,31" fill="none"/>
<path d="M1,9.500 L9.500,13 L9.500,21 L15,23.500 L15,31 L1,25 Z" fill="url(#gd)"/>
</g>
<!-- sketch -->
<g transform="translate(375,141)" stroke-linejoin="round">
<path d="M1,1 L29,1 L29,27 L23,33 L1,33 Z" fill="url(#gpage)" stroke="#a0a0a0" stroke-width="1.300"/>
<path d="M29,27 L23,27 L23,33 Z" fill="#fafafa" stroke="#a0a0a0" stroke-width="1"/>
<rect x="5" y="15" width="14" height="13.500" fill="none" stroke="#9a9a9a" stroke-width="2.400"/>
<circle cx="19" cy="13" r="7.500" fill="none" stroke="#9a9a9a" stroke-width="2.400"/>
</g>
<use href="#ddarrow" x="415" y="153.500"/>
<!-- sketch check -->
<g transform="translate(443,141)" stroke-linejoin="round">
<path d="M1,1 L29,1 L29,33 L1,33 Z" fill="url(#gpage)" stroke="#a0a0a0" stroke-width="1.300"/>
<rect x="5" y="15" width="14" height="13.500" fill="none" stroke="#a2a2a2" stroke-width="2.400"/>
<circle cx="19" cy="13" r="7.500" fill="none" stroke="#a2a2a2" stroke-width="2.400"/>
<circle cx="22.500" cy="23.700" r="8.800" fill="url(#gd)" stroke="#d2d2d2" stroke-width="1.200"/>
<path d="M17.500,23.500 L21.500,27.500 L28.500,20" fill="none" stroke="#ffffff" stroke-width="2.600" stroke-linecap="round"/>
</g>
<!-- cone + magnifier -->
<g transform="translate(493,141)" stroke-linejoin="round">
<path d="M9.500,8 L16,8 L25.500,28.500 C25.500,33 1,33 1,28.500 Z" fill="url(#gg2)" stroke="#858585" stroke-width="1.200"/>
<path d="M17,11 L23.500,17.500" stroke="#858585" stroke-width="3.600" stroke-linecap="round"/>
<circle cx="12.500" cy="6.500" r="6" fill="#efefef" stroke="#8a8a8a" stroke-width="1.500"/>
</g>
<!-- blob -->
<g transform="translate(537,140)">
<radialGradient id="gblob" cx="0.55" cy="0.5" r="0.6"><stop offset="0" stop-color="#9c9c9c"/><stop offset="1" stop-color="#c2c2c2"/></radialGradient>
<path d="M3.500,5 C8,2.500 13,7 19,4.500 C23,2.500 27,1.500 30.500,4 C32,9 31,14 28,18 C26,21 28,26 26,31 C22,35 18,30 14,29 C9,28 4,27 3,21 C2.500,16 2,11 3.500,5 Z" fill="url(#gblob)" stroke="#858585" stroke-width="1.200"/>
<circle cx="30.300" cy="4.300" r="2.800" fill="#909090" stroke="#7a7a7a" stroke-width="0.900"/>
<circle cx="3.100" cy="15.400" r="2.800" fill="#909090" stroke="#7a7a7a" stroke-width="0.900"/>
<circle cx="25.800" cy="31.300" r="2.800" fill="#909090" stroke="#7a7a7a" stroke-width="0.900"/>
</g>
<!-- sheep -->
<g transform="translate(585,141)" stroke-linejoin="round">
<path d="M6,14 C2,17 0.500,21 2,24 C5,23 8,21 9.500,17 Z M28,14 C32,17 33.500,21 32,24 C29,23 26,21 24.500,17 Z" fill="#9a9a9a" stroke="#858585" stroke-width="1"/>
<path d="M8,12 C5,8 8,3 12,4 C13,0.500 18,0 20,2.500 C23,0.500 27.500,3 26.500,7 C30,8 29.500,13 26,14 L8,14 Z" fill="#c9c9c9" stroke="#8e8e8e" stroke-width="1.100"/>
<path d="M8.500,13 C8,22 11,30 17,33 C23,30 26,22 25.500,13 C21,10.500 13,10.500 8.500,13 Z" fill="#a2a2a2" stroke="#858585" stroke-width="1.100"/>
<ellipse cx="16.500" cy="17.500" rx="4.600" ry="3.300" fill="#ffffff"/>
<circle cx="17.800" cy="17.700" r="1.700" fill="#444"/><circle cx="21.500" cy="17.500" r="1.200" fill="#444"/>
<path d="M14.500,26.500 L17,28.500 L19.500,26.500 M17,28.500 L17,31" fill="none" stroke="#6a6a6a" stroke-width="1.100"/>
</g>
<!-- diamond -->
<g transform="translate(633,141)">
<path d="M19.100,3.100 L30.200,14.700 L14.300,30.300 L3,19 Z" fill="none" stroke="#7e7e7e" stroke-width="3.200" stroke-linejoin="round"/>
<g fill="#909090" stroke="#757575" stroke-width="1"><circle cx="19.100" cy="3.100" r="2.800"/><circle cx="30.200" cy="14.700" r="2.800"/><circle cx="14.300" cy="30.300" r="2.800"/><circle cx="3" cy="19" r="2.800"/></g>
</g>
<use href="#ddarrow" x="674.500" y="153.500"/>

<!-- ===== Row 3 ===== -->
<use href="#grip" x="6" y="205.500"/>
<!-- pad -->
<g transform="translate(22,200)" stroke="#7a7a7a" stroke-width="1.300" stroke-linejoin="round">
<path d="M1,24.500 L17,18.500 L32,24.500 L16,31 Z" fill="#ffffff" stroke="#757575" stroke-width="2.600"/>
<path d="M1,6.500 L17,0.800 L32,6 L32,16 L17,22 L1,16.500 Z" fill="url(#gg)"/>
<path d="M1,6.500 L17,0.800 L32,6 L17,12 Z" fill="#ececec"/>
<path d="M17,12 L17,22" fill="none"/>
</g>
<!-- revolve -->
<g transform="translate(68,200)" stroke-linejoin="round" stroke-linecap="round">
<path d="M27,5.500 L34,1.500 M2,27.500 L10,22.500" stroke="#8a8a8a" stroke-width="3"/>
<path d="M1,9.500 C9,5.500 15,3 21,1.500 C30,6 34,15 33.500,23.500 C28,26 23,29 19,31.500 C18,24 14,16.500 5,17.500 Z" fill="url(#gg2)" stroke="#7d7d7d" stroke-width="1.300"/>
<path d="M1,9.500 C11,8 19,17 19,31.500" fill="none" stroke="#7d7d7d" stroke-width="1.300"/>
</g>
<!-- loft -->
<g transform="translate(119,202)" stroke="#7d7d7d" stroke-width="1.300" stroke-linejoin="round">
<path d="M1,12.500 L11,1 L30.500,3 L30.500,28.500 L12.500,25.500 L1,25.500 Z" fill="url(#gg2)"/>
<path d="M11,1 L30.500,3 L30.500,28.500" fill="none" stroke-width="2.600"/>
<rect x="1.500" y="12.500" width="11" height="13" fill="#a9a9a9" stroke-width="2.200"/>
<rect x="4.500" y="15.500" width="5" height="7" fill="#c9c9c9" stroke-width="1"/>
</g>
<!-- sweep -->
<g transform="translate(165,199)" stroke="#7d7d7d" stroke-width="1.300" stroke-linejoin="round">
<ellipse cx="31" cy="3" rx="1.800" ry="2.800" transform="rotate(25 31 3)" fill="#9a9a9a"/>
<path d="M1,18.500 L6,16.500 C10,12 12,7 12.500,1.500 L20.500,3.500 L33.500,21.500 C28,27.500 20,31 11.500,31.500 L1,29.500 Z" fill="url(#gg2)"/>
<path d="M12.500,1.500 L20.500,3.500 L33.500,21.500" fill="none" stroke-width="2.400"/>
<path d="M1,18.500 L11.500,20.500 L11.500,31.500 M11.500,20.500 C15,16 17,10 17.500,4" fill="none"/>
<rect x="2.500" y="23" width="6" height="3.200" rx="1.500" fill="#8a8a8a" stroke-width="0.900"/>
</g>
<!-- helix -->
<g transform="translate(213,199)" stroke-linejoin="round" stroke-linecap="round">
<path d="M14.100,8.200 C16,4 19.500,1 23.900,0.300 L25.600,9.300 Z" fill="#dcdcdc" stroke="#7c7c7c" stroke-width="1.100"/>
<path d="M23.900,0.300 L25.600,9.300 L23.600,9.300 L21.800,1.800 Z" fill="#8c8c8c" stroke="none"/>
<path d="M19,16.500 L32.800,5" stroke="#7c7c7c" stroke-width="2.600"/>
<path d="M19,16.500 L32.800,5" stroke="#a0a0a0" stroke-width="1.200"/>
<ellipse cx="18" cy="18" rx="12.600" ry="8.300" transform="rotate(22 18 18)" fill="#8c8c8c" stroke="#7c7c7c" stroke-width="1.100"/>
<path d="M4.800,12.500 A12.800,8.400 22 1 1 28.600,21.300 A12.800,8.400 22 1 1 4.800,12.500 Z M10.700,16.700 A5.800,3.700 22 1 0 21.500,21 A5.800,3.700 22 1 0 10.700,16.700 Z" fill="#dcdcdc" fill-rule="evenodd" stroke="#7c7c7c" stroke-width="1.100"/>
<path d="M10.700,16.700 A5.800,3.700 22 1 0 21.500,21 A5.800,3.700 22 1 0 10.700,16.700 Z" fill="#eeeeee" stroke="none"/><path d="M10.700,16.700 A5.800,3.700 22 0 1 21.500,21 C19.500,18.800 14,16.800 10.700,16.700 Z" fill="#b0b0b0" stroke="none"/>
<path d="M9,27 C10,30.500 12.500,33 15.700,33.700 L14.700,24.200 Z" fill="#dcdcdc" stroke="#7c7c7c" stroke-width="1.100"/>
<path d="M15.700,33.700 L14.700,24.200 L12.800,25 L13.800,32.800 Z" fill="#8c8c8c" stroke="none"/>
<path d="M1.300,31.300 L16.800,18.400" stroke="#7c7c7c" stroke-width="2.600"/>
<path d="M1.300,31.300 L16.800,18.400" stroke="#a0a0a0" stroke-width="1.200"/>
</g>
<!-- primitive cube -->
<g transform="translate(261,200)" stroke-linejoin="round">
<path d="M3.200,8 L19.300,1.200 L31.500,4.500 L30.400,24.300 L19.300,29.400 L3.200,26.800 Z" fill="url(#gg)" stroke="#858585" stroke-width="1.200"/>
<path d="M3.200,8 L19.300,8.200 L31.500,4.500" fill="none" stroke="#858585" stroke-width="1.200"/>
<path d="M19.300,8.200 L19.300,29.400 M3.200,26.800 L19.300,29.400 L30.400,24.300" fill="none" stroke="#757575" stroke-width="2.600"/>
<g fill="#8f8f8f" stroke="#707070" stroke-width="1"><circle cx="19.300" cy="8.200" r="2.900"/><circle cx="3.200" cy="26.800" r="2.900"/><circle cx="19.300" cy="29.400" r="2.900"/><circle cx="30.400" cy="24.300" r="2.900"/></g>
</g>
<use href="#ddarrow" x="303" y="212.500"/>
<use href="#vs" x="327" y="203"/>
<!-- pocket -->
<g transform="translate(342,201)" stroke="#6b6b6b" stroke-width="1.300" stroke-linejoin="round">
<path d="M1,14.500 L20,1 L33.500,6.500 L33.500,17.500 L16,30.500 L1,24.500 Z" fill="#8e8e8e"/>
<path d="M1,14.500 L20,1 L33.500,6.500 L16,20 Z" fill="#b2b2b2"/>
<path d="M16,20 L16,30.500" fill="none"/>
<path d="M9.500,13.500 L19.500,6 L26,8.500 L16,16 Z" fill="#7d7d7d"/>
<path d="M12,13 L19.500,8 L19.500,6" fill="none" stroke-width="0.900"/>
</g>
<!-- hole -->
<g transform="translate(389,198)" stroke="#6b6b6b" stroke-width="1.300" stroke-linejoin="round">
<path d="M1,1 L22,3.500 L34.500,9 L34.500,34.500 L22,32 L1,29 Z" fill="#8a8a8a"/>
<path d="M1,1 L22,3.500 L22,32 L1,29 Z" fill="#a4a4a4"/>
<ellipse cx="12.500" cy="17" rx="9" ry="11" fill="#727272"/>
<ellipse cx="14" cy="17.300" rx="6.800" ry="8.800" fill="#9c9c9c" stroke="none"/>
<ellipse cx="17.200" cy="17.500" rx="3.200" ry="6.200" fill="#e6e6e6" stroke="none"/>
</g>
<!-- groove -->
<g transform="translate(437,200)" stroke-linejoin="round" stroke-linecap="round">
<path d="M28,5.500 L34,2 M2,29.500 L9,25" stroke="#7d7d7d" stroke-width="2.800"/>
<path d="M1.500,11 C6,9 9,8.500 12,9.500 C14,5 16,2 19,1 C28,5 33,13 33,21.500 C30,22.500 28,24 27,26.500 C24,27 21,29 18.500,31.500 C17,25 13,19 5.500,19.500 Z" fill="#929292" stroke="#696969" stroke-width="1.300"/>
<path d="M12,9.500 C20,12 26,19 27,26.500 M1.500,11 C10,11 18,19 18.500,31.500" fill="none" stroke="#696969" stroke-width="1.200"/>
</g>
<!-- sub loft -->
<g transform="translate(487,202)" stroke="#6e6e6e" stroke-width="1.300" stroke-linejoin="round">
<path d="M1,12.500 L11,1 L30.500,3 L30.500,28.500 L12.500,25.500 L1,25.500 Z" fill="#8e8e8e"/>
<path d="M11,1 L30.500,3 L30.500,28.500" fill="none" stroke="#8a8a8a" stroke-width="2.600"/>
<rect x="1.500" y="12.500" width="11" height="13" fill="#9c9c9c" stroke-width="2.200" stroke="#858585"/>
<rect x="4.500" y="15.500" width="5" height="7" fill="#7a7a7a" stroke-width="1"/>
</g>
<!-- sub sweep -->
<g transform="translate(533,199)" stroke="#6e6e6e" stroke-width="1.300" stroke-linejoin="round">
<ellipse cx="31.500" cy="3" rx="1.800" ry="2.800" transform="rotate(25 31.500 3)" fill="#9a9a9a"/>
<path d="M1,18.500 L6,16.500 C10,12 12,7 12.500,1.500 L20.500,3.500 L33.500,21.500 C28,27.500 20,31 11.500,31.500 L1,29.500 Z" fill="#8c8c8c"/>
<path d="M12.500,1.500 L20.500,3.500 L33.500,21.500" fill="none" stroke="#8a8a8a" stroke-width="2.400"/>
<path d="M1,18.500 L11.500,20.500 L11.500,31.500 M11.500,20.500 C15,16 17,10 17.500,4" fill="none"/>
<rect x="2.500" y="23" width="6" height="3.200" rx="1.500" fill="#b5b5b5" stroke-width="0.900"/>
</g>
<!-- sub helix -->
<g transform="translate(582,199)" stroke-linejoin="round" stroke-linecap="round">
<path d="M14.100,8.200 C16,4 19.500,1 23.900,0.300 L25.600,9.300 Z" fill="#9c9c9c" stroke="#646464" stroke-width="1.100"/>
<path d="M23.900,0.300 L25.600,9.300 L23.600,9.300 L21.800,1.800 Z" fill="#6e6e6e" stroke="none"/>
<path d="M19,16.500 L32.800,5" stroke="#646464" stroke-width="2.600"/>
<path d="M19,16.500 L32.800,5" stroke="#8a8a8a" stroke-width="1.200"/>
<ellipse cx="18" cy="18" rx="12.600" ry="8.300" transform="rotate(22 18 18)" fill="#6e6e6e" stroke="#646464" stroke-width="1.100"/>
<path d="M4.800,12.500 A12.800,8.400 22 1 1 28.600,21.300 A12.800,8.400 22 1 1 4.800,12.500 Z M10.700,16.700 A5.800,3.700 22 1 0 21.500,21 A5.800,3.700 22 1 0 10.700,16.700 Z" fill="#9c9c9c" fill-rule="evenodd" stroke="#646464" stroke-width="1.100"/>
<path d="M10.700,16.700 A5.800,3.700 22 1 0 21.500,21 A5.800,3.700 22 1 0 10.700,16.700 Z" fill="#eeeeee" stroke="none"/><path d="M10.700,16.700 A5.800,3.700 22 0 1 21.500,21 C19.500,18.800 14,16.800 10.700,16.700 Z" fill="#7d7d7d" stroke="none"/>
<path d="M9,27 C10,30.500 12.500,33 15.700,33.700 L14.700,24.200 Z" fill="#9c9c9c" stroke="#646464" stroke-width="1.100"/>
<path d="M15.700,33.700 L14.700,24.200 L12.800,25 L13.800,32.800 Z" fill="#6e6e6e" stroke="none"/>
<path d="M1.300,31.300 L16.800,18.400" stroke="#646464" stroke-width="2.600"/>
<path d="M1.300,31.300 L16.800,18.400" stroke="#8a8a8a" stroke-width="1.200"/>
</g>
<!-- sub cube -->
<g transform="translate(630,200)" stroke-linejoin="round">
<path d="M3.200,8 L19.300,1.200 L31.500,4.500 L30.400,24.300 L19.300,29.400 L3.200,26.800 Z" fill="#8e8e8e" stroke="#6e6e6e" stroke-width="1.200"/>
<path d="M3.200,8 L19.300,8.200 L31.500,4.500" fill="none" stroke="#6e6e6e" stroke-width="1.200"/>
<path d="M19.300,8.200 L19.300,29.400 M3.200,26.800 L19.300,29.400 L30.400,24.300" fill="none" stroke="#858585" stroke-width="2.400"/>
<g fill="#a8a8a8" stroke="#707070" stroke-width="1"><circle cx="19.300" cy="8.200" r="2.900"/><circle cx="3.200" cy="26.800" r="2.900"/><circle cx="19.300" cy="29.400" r="2.900"/><circle cx="30.400" cy="24.300" r="2.900"/></g>
</g>
<use href="#ddarrow" x="671.500" y="212.500"/>
<use href="#vs" x="696.300" y="203"/>
<!-- boolean -->
<g stroke="#787878" stroke-width="1.200">
<radialGradient id="gsph" cx="0.4" cy="0.35" r="0.7"><stop offset="0" stop-color="#b5b5b5"/><stop offset="1" stop-color="#8c8c8c"/></radialGradient>
<circle cx="733.200" cy="212.700" r="10.600" fill="url(#gsph)"/>
<circle cx="721.500" cy="221" r="10.600" fill="url(#gsph)"/>
</g>
<use href="#grip" x="767" y="205.500"/>
<!-- fillet -->
<g transform="translate(780,199)" stroke="#6e6e6e" stroke-width="1.200" stroke-linejoin="round">
<path d="M1,20 C1,10 6,4.500 14,3.500 L23,1 L34.500,7 L34.500,22.500 L17.500,32.500 L1,27.500 Z" fill="#8c8c8c"/>
<path d="M14,3.500 L23,1 L34.500,7 L26,9.500 Z" fill="#a9a9a9"/>
<path d="M1,20 C1,10 6,4.500 14,3.500 L26,9.500 C19,10.500 17.500,16 17.500,24 Z" fill="#7f7f7f"/>
<path d="M1,20 L17.500,24 L17.500,32.500 L1,27.500 Z" fill="#a2a2a2"/>
<path d="M17.500,24 C17.500,16 19,10.500 26,9.500 L34.500,7" fill="none"/>
</g>
<!-- chamfer -->
<g transform="translate(828,199)" stroke="#6e6e6e" stroke-width="1.200" stroke-linejoin="round">
<path d="M1,20 L13,3.500 L22,1 L34.500,7 L34.500,22.500 L17.500,32.500 L1,27.500 Z" fill="#8c8c8c"/>
<path d="M13,3.500 L22,1 L34.500,7 L27,9.500 Z" fill="#a9a9a9"/>
<path d="M1,20 L13,3.500 L27,9.500 L17.500,24 Z" fill="#7f7f7f"/>
<path d="M1,20 L17.500,24 L17.500,32.500 L1,27.500 Z" fill="#a2a2a2"/>
<path d="M17.500,24 L27,9.500 L34.500,7" fill="none"/>
</g>
<!-- thickness -->
<g transform="translate(876,199)" stroke="#6e6e6e" stroke-width="1.200" stroke-linejoin="round">
<path d="M1,8.500 L17.500,1 L34.500,8 L34.500,25.500 L18.500,33.500 L1,26 Z" fill="#9c9c9c"/>
<path d="M1,8.500 L17.500,1 L34.500,8 L18.500,14.500 Z" fill="#a9a9a9"/>
<path d="M6,9.500 L28.500,8.500 L18.500,12 Z" fill="#7f7f7f" stroke-width="0.900"/>
<path d="M18.500,14.500 L18.500,33.500" fill="none" stroke-width="2.400" stroke="#858585"/>
<path d="M4.500,13.500 L15,17.500 L15,28 L4.500,23.500 Z" fill="#7f7f7f" stroke-width="0.900"/>
<path d="M22,17.500 L31,13.500 L31,23.500 L22,28 Z" fill="#8a8a8a" stroke-width="0.900"/>
<path d="M13,30 L18.500,27 L24,30 L18.500,32.500 Z" fill="#f4f4f4" stroke="none"/>
</g>
<!-- draft -->
<g transform="translate(925,199)" stroke="#6e6e6e" stroke-width="1.200" stroke-linejoin="round">
<path d="M5,4.500 L18,1 L34,6 L34,24.500 L18,32.500 L1,27 Z" fill="#8e8e8e"/>
<path d="M5,4.500 L18,1 L34,6 L34,24.500 L18,32.500 L1,27 Z" fill="none" stroke="#858585" stroke-width="2.200"/>
<path d="M9,8 L18,5.500 L30,9 L30,22 L19,27.500 L6,23.500 Z" fill="#7f7f7f" stroke-width="0.900"/>
<path d="M18,5.500 L18,19 L6,23.500 M18,19 L30,22" fill="none" stroke-width="0.900"/>
<path d="M6,23.500 L18,19 L30,22 L19,27.500 Z" fill="#9f9f9f" stroke-width="0.900"/>
</g>
<use href="#grip" x="981" y="205.500"/>

<!-- mirror -->
<g transform="translate(996,199)" stroke="#858585" stroke-width="1.100" stroke-linejoin="round">
<path d="M0.5,18 L26,2.500 L34,5.500 L34,33.500 L0.500,33.500 Z" fill="#a6a6a6"/>
<path d="M1,26 L34,33 M1,20 L34,29" fill="none" stroke="#999" stroke-width="0.800"/>
<path d="M6,5 L10,1 L17.500,6 L17.500,20 L11,23.500 L6,19 Z" fill="#8a8a8a" stroke="#6e6e6e"/>
<path d="M10,1 L11,23.500" fill="none" stroke="#6e6e6e"/>
<path d="M17,15 C17,12 31,12 31,15 L31,26 C31,29.500 17,29.500 17,26 Z" fill="url(#gg)" stroke="#9a9a9a"/>
<path d="M17,15 L24,10.500 L31,15 C31,17.500 17,17.500 17,15 Z" fill="#f1f1f1" stroke="#b0b0b0" stroke-width="0.800"/>
</g>
<!-- linear pattern -->
<g transform="translate(1044,199)" stroke="#858585" stroke-width="1.100" stroke-linejoin="round">
<path d="M0.5,18 L26,2.500 L34,5.500 L34,33.500 L0.500,33.500 Z" fill="#a6a6a6"/>
<path d="M1,26 L34,33" fill="none" stroke="#999" stroke-width="0.800"/>
<use href="#cbD" x="1.500" y="14.500"/><use href="#cbL" x="12.500" y="14"/><use href="#cbL" x="23.500" y="13"/>
</g>
<!-- polar pattern -->
<g transform="translate(1092,199)" stroke="#858585" stroke-width="1.100" stroke-linejoin="round">
<path d="M0.5,18 L26,2.500 L34,5.500 L34,33.500 L0.500,33.500 Z" fill="#a6a6a6"/>
<path d="M1,26 L34,33" fill="none" stroke="#999" stroke-width="0.800"/>
<use href="#cbL" x="13.500" y="4"/><use href="#cbL" x="5.500" y="10"/><use href="#cbL" x="22.500" y="7.500"/><use href="#cbL" x="23" y="16"/><use href="#cbD" x="5.500" y="16.500"/><use href="#cbL" x="14.500" y="19"/>
</g>
<!-- multitransform -->
<g transform="translate(1140,199)" stroke="#858585" stroke-width="1.100" stroke-linejoin="round">
<path d="M0.5,18 L26,2.500 L34,5.500 L34,33.500 L0.500,33.500 Z" fill="#a6a6a6"/>
<path d="M1,26 L34,33" fill="none" stroke="#999" stroke-width="0.800"/>
<path d="M15,9 L24,2.500 L33.500,7 L33.500,19 L24,24 L15,20 Z" fill="#e4e4e4" stroke="#8f8f8f"/>
<path d="M15,9 L24,13 L33.500,7 M24,13 L24,24" fill="none" stroke="#9a9a9a" stroke-width="0.800"/>
<use href="#cbL" x="4" y="5.500"/>
<use href="#cbD" x="8.500" y="19"/>
<g transform="translate(19.500,17) scale(1.350)"><use href="#cbL"/></g>
</g>
</svg>

<div class="t" style="left:41.6px;top:8.6px;font-size:17.25px;line-height:17.25px;letter-spacing:0.00px;color:#111;">* Unnamed1 - FreeCAD 1.0.0</div>
<div class="t" style="left:12.6px;top:47.5px;font-size:17.83px;line-height:17.83px;letter-spacing:-0.94px;color:#111;"><u>F</u>ile</div>
<div class="t" style="left:60.5px;top:47.5px;font-size:17.83px;line-height:17.83px;letter-spacing:-0.34px;color:#111;"><u>E</u>dit</div>
<div class="t" style="left:113.0px;top:47.5px;font-size:17.83px;line-height:17.83px;letter-spacing:-0.21px;color:#111;"><u>V</u>iew</div>
<div class="t" style="left:171.4px;top:47.5px;font-size:17.83px;line-height:17.83px;letter-spacing:0.37px;color:#111;"><u>T</u>ools</div>
<div class="t" style="left:236.3px;top:47.5px;font-size:17.83px;line-height:17.83px;letter-spacing:-0.14px;color:#111;"><u>M</u>acro</div>
<div class="t" style="left:307.8px;top:47.5px;font-size:17.83px;line-height:17.83px;letter-spacing:-0.52px;color:#111;"><u>S</u>ketch</div>
<div class="t" style="left:381.5px;top:47.5px;font-size:17.83px;line-height:17.83px;letter-spacing:-0.30px;color:#111;"><u>P</u>art Design</div>
<div class="t" style="left:493.6px;top:47.5px;font-size:17.83px;line-height:17.83px;letter-spacing:0.10px;color:#111;"><u>W</u>indows</div>
<div class="t" style="left:587.8px;top:47.5px;font-size:17.83px;line-height:17.83px;letter-spacing:0.28px;color:#111;"><u>H</u>elp</div>
<div class="t" style="left:402.0px;top:91.7px;font-size:17.1px;line-height:17.1px;letter-spacing:-0.53px;color:#111;">Part Design</div>
<div class="t" style="left:5.0px;top:259.6px;font-size:16.67px;line-height:16.67px;letter-spacing:-0.72px;color:#5a5a5a;">Model</div>
<div class="t" style="left:103.5px;top:258.4px;font-size:16.67px;line-height:16.67px;letter-spacing:-0.59px;color:#111;">Tasks</div>
<div class="t" style="left:184.3px;top:289.3px;font-size:16.81px;line-height:16.81px;letter-spacing:-0.63px;color:#111;">Tasks</div>
<div class="t" style="left:142.5px;top:344.2px;font-size:16.81px;line-height:16.81px;letter-spacing:-2.28px;color:#111;">OK</div>
<div class="t" style="left:273.0px;top:344.2px;font-size:16.81px;line-height:16.81px;letter-spacing:-0.96px;color:#111;">Cancel</div>
<div class="t" style="left:46.0px;top:407.4px;font-size:16.67px;line-height:16.67px;letter-spacing:0.38px;color:#0a0a0a;font-weight:700;-webkit-text-stroke:0.45px #0a0a0a;">Pad parameters</div>
<div class="t" style="left:30.3px;top:463.5px;font-size:16.67px;line-height:16.67px;letter-spacing:-0.24px;color:#111;">Type</div>
<div class="t" style="left:203.0px;top:463.4px;font-size:16.81px;line-height:16.81px;letter-spacing:-0.49px;color:#111;">Dimension</div>
<div class="t" style="left:30.3px;top:510.5px;font-size:16.96px;line-height:16.96px;letter-spacing:-0.56px;color:#111;">Length</div>
<div class="t" style="left:216.1px;top:510.7px;font-size:16.81px;line-height:16.81px;letter-spacing:-0.35px;color:#132a5c;">0.10 "</div>
<div class="t" style="left:66.6px;top:553.0px;font-size:17.39px;line-height:17.39px;letter-spacing:-0.53px;color:#111;">Symmetric to plane</div>
<div class="t" style="left:66.6px;top:590.0px;font-size:16.96px;line-height:16.96px;letter-spacing:-0.99px;color:#111;">Reversed</div>
<div class="t" style="left:52.9px;top:636.0px;font-size:16.81px;line-height:16.81px;letter-spacing:-0.15px;color:#111;">Direction</div>
<div class="t" style="left:107.0px;top:631.7px;font-size:16.38px;line-height:16.38px;letter-spacing:0.47px;color:#111;z-index:6;">Reverses pad direction</div>
<div class="t" style="left:48.4px;top:665.7px;font-size:16.81px;line-height:16.81px;letter-spacing:-0.17px;color:#111;">Direction/edge:</div>
<div class="t" style="left:228.0px;top:664.7px;font-size:17.39px;line-height:17.39px;letter-spacing:-0.66px;color:#111;">Sketch normal</div>
<div class="t" style="left:84.4px;top:707.0px;font-size:16.81px;line-height:16.81px;letter-spacing:-0.29px;color:#111;">Show direction</div>
<div class="t" style="left:84.4px;top:745.6px;font-size:16.96px;line-height:16.96px;letter-spacing:-0.29px;color:#111;">Length along sketch normal</div>
<div class="t" style="left:30.7px;top:806.7px;font-size:16.81px;line-height:16.81px;letter-spacing:-0.18px;color:#111;">Taper angle</div>
<div class="t" style="left:247.8px;top:806.9px;font-size:17.39px;line-height:17.39px;letter-spacing:-0.22px;color:#111;">0.00 °</div>
<div class="t" style="left:66.6px;top:862.7px;font-size:16.81px;line-height:16.81px;letter-spacing:-0.32px;color:#111;">Update view</div>
<div class="t" style="left:987.6px;top:292.2px;font-size:36.52px;line-height:36.52px;letter-spacing:-0.14px;color:#e31e26;font-weight:700;z-index:60;">Set the</div>
<div class="t" style="left:946.0px;top:333.5px;font-size:36.52px;line-height:36.52px;letter-spacing:0.31px;color:#e31e26;font-weight:700;z-index:60;">"Length" to</div>
<div class="t" style="left:937.0px;top:374.8px;font-size:36.52px;line-height:36.52px;letter-spacing:0.15px;color:#e31e26;font-weight:700;z-index:60;">0.1 inches in</div>
<div class="t" style="left:946.0px;top:416.0px;font-size:36.52px;line-height:36.52px;letter-spacing:0.14px;color:#e31e26;font-weight:700;z-index:60;">place of the</div>
<div class="t" style="left:935.3px;top:458.3px;font-size:36.52px;line-height:36.52px;letter-spacing:0.15px;color:#e31e26;font-weight:700;z-index:60;">default value</div>
<div class="t" style="left:1001.4px;top:690.2px;font-size:36.52px;line-height:36.52px;letter-spacing:-0.00px;color:#e31e26;font-weight:700;z-index:60;">Hit the</div>
<div class="t" style="left:957.1px;top:731.2px;font-size:36.52px;line-height:36.52px;letter-spacing:0.27px;color:#e31e26;font-weight:700;z-index:60;">"Reversed"</div>
<div class="t" style="left:949.6px;top:772.4px;font-size:36.52px;line-height:36.52px;letter-spacing:0.46px;color:#e31e26;font-weight:700;z-index:60;">check-box if</div>
<div class="t" style="left:945.1px;top:814.5px;font-size:36.52px;line-height:36.52px;letter-spacing:0.27px;color:#e31e26;font-weight:700;z-index:60;">the new lugs</div>
<div class="t" style="left:950.5px;top:856.6px;font-size:36.52px;line-height:36.52px;letter-spacing:0.26px;color:#e31e26;font-weight:700;z-index:60;">are invisible</div>
<svg class="abs" style="left:0;top:0;z-index:50" width="1189" height="944" viewBox="0 0 1189 944">
<g fill="none" stroke="#ec1c24" stroke-linecap="round" stroke-linejoin="round">
<ellipse cx="236.75" cy="521.2" rx="57.5" ry="27.9" stroke-width="8.2" transform="rotate(-1 236.75 521.2)"/>
<ellipse cx="86.3" cy="595.3" rx="82.9" ry="27.8" stroke-width="8.8"/>
<path d="M322.5,479 L285.5,506.8 L339,507.4" stroke-width="9.4"/>
<path d="M41.8,675.5 L70.2,623 L86.4,665.4" stroke-width="8.6"/>
</g>
<g fill="#ec1c24" stroke="none">
<path d="M945.0,308.0 L941.7,308.0 L938.3,307.9 L934.9,307.9 L931.4,307.8 L928.0,307.8 L924.5,307.7 L921.0,307.7 L917.6,307.6 L914.1,307.6 L910.6,307.5 L907.2,307.4 L903.7,307.4 L900.3,307.3 L896.8,307.3 L893.4,307.3 L890.1,307.2 L886.7,307.2 L883.4,307.2 L880.1,307.2 L876.9,307.1 L873.7,307.1 L870.6,307.2 L867.5,307.2 L864.5,307.2 L861.5,307.2 L858.5,307.3 L855.6,307.3 L852.8,307.4 L849.9,307.4 L847.2,307.5 L844.4,307.5 L841.7,307.6 L839.0,307.7 L836.3,307.8 L833.6,307.9 L831.0,307.9 L828.4,308.0 L825.8,308.1 L823.3,308.3 L820.8,308.4 L818.2,308.5 L815.7,308.7 L813.3,308.8 L810.8,309.0 L808.4,309.1 L805.9,309.3 L803.5,309.5 L801.1,309.7 L798.7,309.9 L796.4,310.2 L794.0,310.4 L791.8,310.7 L789.5,310.9 L787.3,311.2 L785.1,311.5 L782.9,311.8 L780.7,312.1 L778.6,312.4 L776.5,312.7 L774.4,313.0 L772.3,313.4 L770.2,313.7 L768.1,314.0 L766.0,314.4 L764.0,314.7 L761.9,315.1 L759.8,315.4 L757.8,315.8 L755.7,316.1 L753.6,316.5 L751.6,316.8 L749.5,317.1 L747.3,317.5 L745.2,317.8 L743.1,318.2 L741.0,318.5 L738.9,318.9 L736.8,319.2 L734.7,319.6 L732.6,319.9 L730.6,320.3 L728.5,320.6 L726.4,321.0 L724.3,321.4 L722.2,321.7 L720.1,322.1 L718.1,322.5 L716.0,322.9 L713.9,323.3 L711.8,323.6 L709.7,324.0 L707.7,324.4 L705.6,324.8 L703.5,325.2 L701.4,325.7 L699.3,326.1 L697.2,326.5 L695.1,326.9 L693.0,327.3 L691.0,327.7 L688.9,328.2 L686.8,328.6 L684.7,329.0 L682.6,329.4 L680.5,329.9 L678.4,330.3 L676.3,330.8 L674.2,331.2 L672.1,331.7 L670.0,332.1 L667.9,332.6 L665.8,333.1 L663.7,333.5 L661.6,334.0 L659.5,334.5 L657.4,335.1 L655.3,335.6 L653.2,336.1 L651.1,336.7 L649.0,337.2 L647.0,337.8 L644.9,338.4 L642.9,338.9 L640.9,339.5 L638.8,340.1 L636.8,340.7 L634.8,341.3 L632.8,341.9 L630.7,342.6 L628.7,343.2 L626.7,343.8 L624.7,344.5 L622.7,345.1 L620.7,345.8 L618.7,346.5 L616.6,347.2 L614.6,347.9 L612.6,348.6 L610.5,349.3 L608.4,350.1 L606.4,350.8 L604.3,351.6 L602.2,352.3 L600.1,353.1 L597.9,354.0 L595.8,354.8 L593.6,355.7 L591.3,356.6 L589.1,357.5 L586.8,358.4 L584.6,359.3 L582.3,360.3 L580.0,361.3 L577.7,362.3 L575.4,363.2 L573.2,364.2 L570.9,365.2 L568.6,366.2 L566.4,367.2 L564.2,368.2 L562.0,369.2 L559.8,370.1 L557.6,371.1 L555.5,372.0 L553.5,373.0 L551.4,373.9 L549.5,374.8 L547.5,375.6 L545.6,376.5 L543.8,377.3 L541.9,378.2 L540.1,379.0 L538.3,379.9 L536.6,380.7 L534.8,381.5 L533.1,382.3 L531.4,383.1 L529.7,383.9 L528.1,384.7 L526.5,385.5 L524.9,386.3 L523.3,387.0 L521.7,387.8 L520.2,388.6 L518.6,389.3 L517.1,390.1 L515.6,390.8 L514.1,391.6 L512.6,392.3 L511.1,393.1 L509.7,393.8 L508.2,394.5 L506.8,395.3 L505.4,396.0 L504.0,396.7 L502.6,397.4 L501.3,398.1 L500.0,398.8 L498.7,399.5 L497.5,400.1 L496.2,400.8 L495.0,401.5 L493.7,402.2 L492.5,402.8 L491.3,403.5 L490.1,404.1 L488.9,404.8 L487.7,405.5 L486.5,406.1 L485.4,406.8 L484.2,407.4 L483.0,408.1 L481.8,408.8 L480.5,409.4 L479.3,410.1 L478.1,410.8 L476.8,411.5 L475.6,412.2 L474.3,412.9 L473.1,413.6 L471.8,414.2 L470.6,414.9 L469.3,415.6 L468.1,416.3 L466.8,417.0 L465.6,417.7 L464.3,418.4 L463.1,419.1 L461.8,419.8 L460.6,420.5 L459.3,421.2 L458.0,421.9 L456.8,422.6 L455.5,423.3 L454.3,424.0 L453.0,424.7 L451.8,425.4 L450.5,426.1 L449.3,426.8 L448.0,427.5 L446.8,428.2 L445.5,429.0 L444.2,429.7 L442.9,430.4 L441.6,431.2 L440.3,431.9 L438.9,432.7 L437.6,433.4 L436.3,434.2 L435.0,435.0 L433.7,435.7 L432.3,436.5 L431.0,437.2 L429.8,438.0 L428.5,438.7 L427.2,439.4 L426.0,440.1 L424.8,440.8 L423.5,441.5 L422.4,442.2 L421.2,442.9 L420.1,443.5 L419.0,444.1 L417.9,444.8 L416.9,445.3 L415.9,445.9 L414.9,446.5 L414.0,447.0 L413.1,447.5 L412.2,448.0 L411.3,448.5 L410.5,449.0 L409.6,449.5 L408.8,449.9 L408.0,450.4 L407.2,450.9 L406.4,451.3 L405.7,451.7 L404.9,452.2 L404.1,452.6 L403.4,453.0 L402.6,453.5 L401.8,453.9 L401.1,454.3 L400.3,454.7 L399.5,455.2 L398.7,455.6 L397.9,456.0 L397.1,456.5 L396.3,456.9 L395.5,457.3 L394.8,457.7 L394.1,458.1 L393.4,458.5 L392.8,458.8 L392.1,459.2 L391.4,459.5 L390.7,459.9 L390.1,460.2 L389.4,460.6 L388.6,461.0 L387.9,461.3 L387.1,461.7 L386.3,462.1 L385.5,462.6 L384.6,463.0 L383.6,463.5 L382.6,464.0 L381.6,464.5 L380.5,465.1 L379.3,465.6 L378.0,466.3 L376.6,466.9 L375.2,467.7 L373.7,468.4 L372.1,469.2 L370.4,470.0 L368.7,470.9 L366.9,471.8 L365.1,472.7 L363.2,473.6 L361.3,474.6 L359.4,475.5 L357.5,476.5 L355.5,477.4 L353.6,478.4 L351.6,479.3 L349.7,480.2 L347.8,481.1 L345.9,482.0 L344.0,482.9 L342.2,483.7 L340.4,484.5 L338.7,485.3 L337.1,486.0 L335.5,486.7 L333.9,487.4 L332.4,488.0 L330.8,488.6 L329.2,489.3 L327.7,489.9 L326.1,490.4 L324.6,491.0 L323.1,491.6 L321.6,492.1 L320.1,492.6 L318.6,493.1 L317.1,493.6 L315.7,494.1 L314.3,494.6 L312.9,495.0 L311.6,495.5 L310.2,495.9 L309.0,496.3 L307.7,496.7 L306.5,497.1 L305.3,497.5 L304.2,497.9 L303.1,498.3 L302.1,498.6 L301.1,498.9 L300.3,499.2 L299.5,499.5 L298.7,499.8 L298.0,500.0 L297.4,500.2 L296.8,500.4 L296.2,500.6 L295.6,500.8 L295.1,500.9 L294.7,501.1 L294.2,501.2 L293.8,501.3 L293.3,501.5 L292.9,501.6 L292.5,501.7 L292.1,501.9 L291.6,502.0 L291.2,502.1 L290.7,502.3 L290.2,502.4 L289.7,502.6 L289.2,502.7 L288.6,502.9 L291.4,511.7 L291.9,511.5 L292.4,511.4 L292.9,511.2 L293.4,511.1 L293.8,511.0 L294.2,510.8 L294.7,510.7 L295.1,510.6 L295.5,510.5 L296.0,510.3 L296.4,510.2 L296.9,510.1 L297.4,509.9 L297.9,509.8 L298.4,509.6 L299.0,509.4 L299.6,509.2 L300.2,509.0 L300.9,508.8 L301.6,508.6 L302.4,508.3 L303.3,508.0 L304.2,507.7 L305.1,507.4 L306.1,507.1 L307.1,506.7 L308.2,506.3 L309.4,506.0 L310.6,505.6 L311.8,505.2 L313.1,504.7 L314.5,504.3 L315.8,503.9 L317.2,503.4 L318.7,502.9 L320.1,502.4 L321.6,501.9 L323.1,501.4 L324.7,500.9 L326.2,500.3 L327.8,499.7 L329.4,499.2 L331.0,498.5 L332.6,497.9 L334.2,497.3 L335.9,496.6 L337.5,496.0 L339.1,495.3 L340.8,494.5 L342.5,493.8 L344.3,493.0 L346.1,492.1 L348.0,491.3 L349.8,490.4 L351.8,489.4 L353.7,488.5 L355.7,487.6 L357.6,486.6 L359.6,485.6 L361.5,484.6 L363.5,483.7 L365.4,482.7 L367.3,481.8 L369.2,480.8 L371.0,479.9 L372.7,479.0 L374.5,478.1 L376.1,477.3 L377.7,476.5 L379.2,475.7 L380.7,475.0 L382.0,474.3 L383.3,473.7 L384.5,473.1 L385.6,472.5 L386.7,472.0 L387.7,471.5 L388.6,471.0 L389.5,470.5 L390.4,470.1 L391.2,469.7 L392.0,469.3 L392.7,468.9 L393.5,468.5 L394.2,468.1 L394.9,467.7 L395.6,467.3 L396.3,467.0 L396.9,466.6 L397.6,466.2 L398.3,465.9 L399.0,465.5 L399.8,465.1 L400.5,464.6 L401.3,464.2 L402.1,463.8 L403.0,463.3 L403.8,462.8 L404.6,462.3 L405.4,461.9 L406.1,461.4 L406.9,461.0 L407.7,460.5 L408.5,460.1 L409.2,459.6 L410.0,459.1 L410.8,458.7 L411.5,458.2 L412.3,457.7 L413.1,457.2 L413.9,456.8 L414.7,456.3 L415.6,455.8 L416.4,455.2 L417.3,454.7 L418.2,454.2 L419.1,453.6 L420.1,453.0 L421.0,452.5 L422.1,451.8 L423.1,451.2 L424.2,450.6 L425.3,449.9 L426.5,449.3 L427.6,448.6 L428.8,447.9 L430.1,447.2 L431.3,446.5 L432.6,445.7 L433.8,445.0 L435.1,444.2 L436.4,443.5 L437.7,442.7 L439.0,442.0 L440.3,441.2 L441.6,440.4 L443.0,439.7 L444.3,438.9 L445.6,438.2 L446.9,437.4 L448.2,436.7 L449.5,435.9 L450.7,435.2 L452.0,434.5 L453.2,433.8 L454.5,433.1 L455.7,432.4 L457.0,431.7 L458.2,431.0 L459.5,430.3 L460.7,429.6 L462.0,428.9 L463.2,428.2 L464.4,427.5 L465.7,426.8 L466.9,426.1 L468.2,425.4 L469.4,424.7 L470.7,424.0 L471.9,423.3 L473.2,422.6 L474.4,421.9 L475.7,421.2 L476.9,420.6 L478.2,419.9 L479.4,419.2 L480.7,418.5 L481.9,417.8 L483.2,417.1 L484.4,416.4 L485.6,415.7 L486.8,415.1 L488.0,414.4 L489.2,413.7 L490.4,413.1 L491.6,412.4 L492.8,411.7 L494.0,411.1 L495.1,410.4 L496.3,409.7 L497.5,409.1 L498.7,408.4 L500.0,407.7 L501.2,407.1 L502.4,406.4 L503.7,405.7 L505.0,405.0 L506.3,404.3 L507.6,403.6 L509.0,402.9 L510.4,402.2 L511.8,401.5 L513.2,400.7 L514.7,400.0 L516.1,399.3 L517.6,398.5 L519.1,397.8 L520.6,397.0 L522.1,396.3 L523.6,395.5 L525.1,394.7 L526.7,394.0 L528.3,393.2 L529.8,392.4 L531.5,391.6 L533.1,390.8 L534.7,390.0 L536.4,389.2 L538.1,388.4 L539.8,387.6 L541.6,386.8 L543.3,386.0 L545.1,385.1 L546.9,384.3 L548.8,383.4 L550.7,382.6 L552.6,381.7 L554.6,380.8 L556.6,379.9 L558.7,378.9 L560.8,378.0 L562.9,377.0 L565.0,376.0 L567.2,375.1 L569.4,374.1 L571.7,373.1 L573.9,372.1 L576.2,371.1 L578.4,370.1 L580.7,369.1 L582.9,368.1 L585.2,367.2 L587.5,366.2 L589.7,365.3 L591.9,364.4 L594.1,363.5 L596.3,362.6 L598.5,361.7 L600.6,360.9 L602.7,360.1 L604.8,359.3 L606.9,358.5 L608.9,357.7 L611.0,357.0 L613.0,356.2 L615.0,355.5 L617.0,354.8 L619.0,354.1 L621.0,353.4 L623.0,352.7 L625.0,352.1 L627.0,351.4 L629.0,350.8 L630.9,350.1 L632.9,349.5 L634.9,348.9 L636.9,348.3 L638.9,347.7 L640.9,347.1 L642.9,346.5 L644.9,345.9 L646.9,345.3 L648.9,344.7 L651.0,344.2 L653.0,343.6 L655.0,343.1 L657.1,342.5 L659.1,342.0 L661.2,341.5 L663.2,341.0 L665.3,340.5 L667.4,340.0 L669.4,339.5 L671.5,339.1 L673.6,338.6 L675.7,338.1 L677.7,337.7 L679.8,337.2 L681.9,336.8 L684.0,336.4 L686.1,335.9 L688.2,335.5 L690.3,335.1 L692.3,334.6 L694.4,334.2 L696.5,333.8 L698.6,333.4 L700.7,332.9 L702.8,332.5 L704.8,332.1 L706.9,331.7 L709.0,331.3 L711.0,330.9 L713.1,330.5 L715.2,330.1 L717.2,329.7 L719.3,329.3 L721.4,328.9 L723.5,328.5 L725.5,328.2 L727.6,327.8 L729.7,327.4 L731.7,327.1 L733.8,326.7 L735.9,326.3 L738.0,326.0 L740.1,325.6 L742.1,325.3 L744.2,324.9 L746.3,324.6 L748.4,324.2 L750.5,323.9 L752.7,323.5 L754.8,323.2 L756.8,322.8 L758.9,322.4 L761.0,322.1 L763.0,321.7 L765.1,321.4 L767.2,321.0 L769.2,320.7 L771.3,320.3 L773.3,320.0 L775.4,319.7 L777.5,319.3 L779.6,319.0 L781.7,318.7 L783.8,318.4 L786.0,318.1 L788.1,317.8 L790.3,317.5 L792.5,317.2 L794.8,317.0 L797.0,316.7 L799.3,316.5 L801.7,316.3 L804.1,316.1 L806.4,315.9 L808.8,315.7 L811.3,315.5 L813.7,315.4 L816.1,315.2 L818.6,315.1 L821.1,314.9 L823.6,314.8 L826.1,314.7 L828.7,314.6 L831.3,314.4 L833.9,314.3 L836.5,314.3 L839.1,314.2 L841.8,314.1 L844.6,314.0 L847.3,313.9 L850.1,313.9 L852.9,313.8 L855.8,313.8 L858.6,313.7 L861.6,313.6 L864.5,313.6 L867.6,313.6 L870.6,313.5 L873.7,313.5 L876.9,313.5 L880.1,313.5 L883.4,313.5 L886.7,313.5 L890.0,313.5 L893.4,313.5 L896.8,313.5 L900.2,313.6 L903.6,313.6 L907.1,313.6 L910.5,313.7 L914.0,313.7 L917.5,313.7 L921.0,313.8 L924.4,313.8 L927.9,313.9 L931.3,313.9 L934.8,313.9 L938.2,314.0 L941.6,314.0 L945.0,314.0 Z"/><circle cx="945.0" cy="311.0" r="3.0"/><circle cx="290.0" cy="507.3" r="4.6"/>
<path d="M66.0,625.4 L65.9,626.6 L65.7,627.8 L65.5,629.0 L65.4,630.1 L65.2,631.3 L65.0,632.5 L64.8,633.6 L64.7,634.8 L64.5,636.0 L64.3,637.1 L64.1,638.3 L63.9,639.5 L63.8,640.7 L63.6,641.9 L63.4,643.1 L63.3,644.3 L63.1,645.6 L62.9,646.8 L62.8,648.1 L62.6,649.4 L62.5,650.6 L62.4,652.0 L62.2,653.3 L62.1,654.7 L62.0,656.0 L61.9,657.4 L61.8,658.8 L61.7,660.3 L61.6,661.7 L61.5,663.2 L61.5,664.7 L61.4,666.2 L61.3,667.7 L61.3,669.2 L61.2,670.8 L61.1,672.3 L61.1,673.8 L61.0,675.3 L61.0,676.9 L61.0,678.4 L60.9,679.9 L60.9,681.4 L60.9,682.9 L60.9,684.3 L60.8,685.8 L60.8,687.2 L60.8,688.6 L60.8,690.0 L60.8,691.4 L60.8,692.7 L60.8,694.1 L60.8,695.5 L60.8,696.9 L60.8,698.3 L60.8,699.7 L60.9,701.0 L60.9,702.4 L60.9,703.8 L61.0,705.1 L61.0,706.4 L61.1,707.7 L61.1,709.0 L61.2,710.3 L61.2,711.5 L61.3,712.7 L61.3,713.9 L61.4,715.0 L61.4,716.2 L61.5,717.2 L61.5,718.3 L61.6,719.3 L61.6,720.2 L61.7,721.2 L61.7,722.0 L61.7,722.9 L61.8,723.6 L61.8,724.4 L61.9,725.1 L61.9,725.8 L62.0,726.5 L62.0,727.1 L62.1,727.7 L62.1,728.3 L62.2,728.9 L62.3,729.4 L62.3,730.0 L62.4,730.5 L62.4,731.1 L62.5,731.6 L62.6,732.1 L62.6,732.7 L62.7,733.2 L62.8,733.8 L62.8,734.4 L62.9,734.9 L63.0,735.6 L63.1,736.2 L63.2,736.8 L63.2,737.5 L63.3,738.1 L63.4,738.8 L63.5,739.4 L63.6,740.1 L63.7,740.8 L63.8,741.4 L63.9,742.1 L64.0,742.7 L64.1,743.4 L64.2,744.0 L64.3,744.7 L64.4,745.3 L64.5,746.0 L64.7,746.6 L64.8,747.3 L64.9,747.9 L65.0,748.5 L65.1,749.1 L65.3,749.8 L65.4,750.4 L65.5,751.0 L65.6,751.5 L65.8,752.1 L65.9,752.6 L66.0,753.1 L66.1,753.6 L66.3,754.1 L66.4,754.6 L66.5,755.1 L66.6,755.6 L66.8,756.1 L66.9,756.6 L67.0,757.1 L67.2,757.5 L67.3,758.0 L67.5,758.5 L67.6,759.0 L67.8,759.5 L68.0,760.0 L68.2,760.6 L68.3,761.1 L68.5,761.7 L68.7,762.2 L68.9,762.8 L69.1,763.5 L69.4,764.1 L69.6,764.7 L69.8,765.4 L70.1,766.1 L70.3,766.8 L70.6,767.5 L70.8,768.2 L71.1,769.0 L71.4,769.7 L71.7,770.5 L71.9,771.3 L72.2,772.1 L72.5,772.8 L72.8,773.6 L73.2,774.5 L73.5,775.3 L73.8,776.1 L74.1,776.9 L74.5,777.7 L74.8,778.5 L75.2,779.4 L75.6,780.2 L75.9,781.0 L76.3,781.8 L76.7,782.7 L77.0,783.5 L77.4,784.3 L77.8,785.1 L78.2,785.9 L78.6,786.8 L79.0,787.6 L79.4,788.5 L79.8,789.3 L80.3,790.2 L80.7,791.1 L81.1,791.9 L81.6,792.8 L82.0,793.7 L82.5,794.6 L83.0,795.5 L83.5,796.3 L84.0,797.2 L84.5,798.1 L85.0,799.0 L85.5,799.8 L86.0,800.7 L86.6,801.6 L87.1,802.5 L87.7,803.3 L88.3,804.2 L88.9,805.1 L89.5,805.9 L90.1,806.8 L90.7,807.7 L91.4,808.6 L92.0,809.4 L92.7,810.3 L93.3,811.2 L94.0,812.0 L94.7,812.9 L95.3,813.8 L96.0,814.6 L96.7,815.5 L97.4,816.3 L98.1,817.1 L98.7,817.9 L99.4,818.8 L100.1,819.6 L100.8,820.3 L101.5,821.1 L102.1,821.9 L102.8,822.6 L103.5,823.3 L104.1,824.0 L104.8,824.8 L105.5,825.5 L106.1,826.1 L106.8,826.8 L107.4,827.5 L108.1,828.1 L108.8,828.8 L109.4,829.4 L110.1,830.1 L110.8,830.7 L111.4,831.3 L112.1,831.9 L112.8,832.5 L113.5,833.1 L114.2,833.7 L114.9,834.3 L115.6,834.9 L116.3,835.5 L117.0,836.0 L117.7,836.6 L118.4,837.2 L119.2,837.7 L119.9,838.3 L120.6,838.9 L121.4,839.4 L122.2,840.0 L122.9,840.5 L123.7,841.0 L124.4,841.5 L125.2,842.1 L126.0,842.6 L126.8,843.1 L127.6,843.6 L128.3,844.1 L129.1,844.5 L129.9,845.0 L130.7,845.5 L131.5,846.0 L132.3,846.4 L133.1,846.9 L133.9,847.3 L134.7,847.8 L135.5,848.2 L136.3,848.7 L137.2,849.1 L138.0,849.6 L138.8,850.0 L139.7,850.4 L140.5,850.8 L141.4,851.3 L142.2,851.7 L143.1,852.1 L143.9,852.5 L144.8,852.9 L145.7,853.3 L146.5,853.6 L147.4,854.0 L148.3,854.4 L149.2,854.8 L150.0,855.1 L150.9,855.5 L151.8,855.8 L152.6,856.2 L153.5,856.5 L154.4,856.9 L155.2,857.2 L156.1,857.6 L157.0,857.9 L157.8,858.2 L158.7,858.6 L159.5,858.9 L160.4,859.2 L161.2,859.6 L162.1,859.9 L162.9,860.2 L163.8,860.5 L164.7,860.8 L165.5,861.1 L166.4,861.4 L167.2,861.7 L168.1,862.0 L169.0,862.3 L169.8,862.6 L170.7,862.9 L171.5,863.2 L172.4,863.5 L173.2,863.8 L174.1,864.0 L175.0,864.3 L175.8,864.6 L176.7,864.8 L177.5,865.1 L178.4,865.3 L179.2,865.6 L180.1,865.9 L181.0,866.1 L181.8,866.3 L182.7,866.6 L183.5,866.8 L184.4,867.0 L185.3,867.2 L186.1,867.5 L187.0,867.7 L187.8,867.9 L188.7,868.1 L189.5,868.3 L190.4,868.5 L191.2,868.7 L192.1,868.9 L192.9,869.1 L193.8,869.3 L194.6,869.5 L195.5,869.7 L196.3,869.9 L197.2,870.0 L198.0,870.2 L198.9,870.4 L199.7,870.6 L200.6,870.8 L201.4,871.0 L202.3,871.1 L203.1,871.3 L204.0,871.5 L204.9,871.6 L205.7,871.8 L206.6,872.0 L207.5,872.1 L208.3,872.3 L209.2,872.4 L210.0,872.6 L210.9,872.7 L211.7,872.9 L212.6,873.0 L213.4,873.2 L214.3,873.3 L215.1,873.5 L216.0,873.6 L216.8,873.8 L217.6,873.9 L218.5,874.0 L219.3,874.2 L220.1,874.3 L220.9,874.5 L221.6,874.6 L222.3,874.7 L223.0,874.8 L223.6,875.0 L224.3,875.1 L224.9,875.2 L225.6,875.4 L226.2,875.5 L226.9,875.7 L227.6,875.8 L228.3,875.9 L229.0,876.1 L229.8,876.2 L230.6,876.3 L231.4,876.5 L232.2,876.6 L233.1,876.7 L234.1,876.8 L235.1,876.9 L236.1,877.0 L237.3,877.1 L238.4,877.2 L239.7,877.3 L241.0,877.4 L242.3,877.5 L243.7,877.6 L245.2,877.6 L246.8,877.7 L248.4,877.8 L250.0,877.9 L251.7,878.0 L253.4,878.0 L255.1,878.1 L256.9,878.2 L258.7,878.2 L260.5,878.3 L262.4,878.3 L264.2,878.4 L266.0,878.4 L267.9,878.5 L269.7,878.5 L271.6,878.5 L273.4,878.5 L275.2,878.5 L277.0,878.5 L278.8,878.4 L280.5,878.4 L282.2,878.4 L283.9,878.3 L285.6,878.2 L287.3,878.1 L289.0,878.0 L290.7,877.9 L292.4,877.8 L294.1,877.7 L295.8,877.6 L297.5,877.5 L299.2,877.3 L300.9,877.2 L302.6,877.0 L304.2,876.9 L305.9,876.7 L307.6,876.5 L309.3,876.4 L311.0,876.2 L312.7,876.0 L314.3,875.9 L316.0,875.7 L317.7,875.5 L319.4,875.4 L321.1,875.2 L322.8,875.0 L324.4,874.8 L326.1,874.7 L327.8,874.5 L329.5,874.3 L331.2,874.1 L332.9,873.9 L334.6,873.7 L336.3,873.5 L338.0,873.3 L339.7,873.1 L341.4,872.9 L343.0,872.7 L344.7,872.5 L346.4,872.3 L348.1,872.1 L349.8,871.9 L351.5,871.6 L353.1,871.4 L354.8,871.2 L356.5,871.0 L358.2,870.8 L359.9,870.6 L361.5,870.4 L363.2,870.2 L364.9,870.0 L366.6,869.9 L368.2,869.7 L369.9,869.5 L371.6,869.3 L373.3,869.1 L375.0,868.9 L376.7,868.7 L378.3,868.5 L380.0,868.4 L381.7,868.2 L383.4,868.0 L385.1,867.8 L386.8,867.6 L388.5,867.4 L390.1,867.2 L391.8,867.0 L393.5,866.8 L395.2,866.6 L396.9,866.4 L398.6,866.2 L400.3,866.0 L402.0,865.8 L403.7,865.6 L405.4,865.4 L407.1,865.2 L408.8,864.9 L410.5,864.7 L412.2,864.5 L413.9,864.2 L415.6,864.0 L417.3,863.8 L419.0,863.5 L420.7,863.3 L422.4,863.1 L424.1,862.8 L425.7,862.6 L427.4,862.3 L429.1,862.1 L430.8,861.9 L432.5,861.6 L434.1,861.4 L435.8,861.2 L437.5,860.9 L439.1,860.7 L440.7,860.5 L442.4,860.3 L443.9,860.1 L445.4,859.9 L446.8,859.7 L448.2,859.6 L449.5,859.4 L450.8,859.3 L452.0,859.2 L453.3,859.1 L454.5,858.9 L455.8,858.8 L457.0,858.7 L458.3,858.6 L459.7,858.4 L461.1,858.3 L462.6,858.1 L464.1,857.9 L465.8,857.7 L467.5,857.5 L469.3,857.2 L471.3,856.9 L473.4,856.6 L475.6,856.3 L478.0,855.9 L480.6,855.4 L483.3,855.0 L486.1,854.5 L489.0,854.0 L492.0,853.4 L495.1,852.8 L498.3,852.2 L501.6,851.6 L504.9,851.0 L508.4,850.3 L511.9,849.6 L515.5,848.9 L519.2,848.2 L523.0,847.5 L526.9,846.8 L530.8,846.0 L534.8,845.2 L538.8,844.5 L543.0,843.7 L547.2,842.9 L551.4,842.1 L555.7,841.3 L560.1,840.5 L564.5,839.7 L569.0,838.9 L573.7,838.1 L578.5,837.3 L583.6,836.4 L588.9,835.5 L594.3,834.5 L599.8,833.6 L605.5,832.6 L611.3,831.6 L617.1,830.6 L623.0,829.6 L628.9,828.6 L634.8,827.6 L640.6,826.6 L646.5,825.6 L652.2,824.6 L657.9,823.7 L663.5,822.8 L668.9,821.9 L674.2,821.0 L679.3,820.2 L684.1,819.5 L688.8,818.7 L693.2,818.1 L697.3,817.5 L701.2,816.9 L704.8,816.4 L708.3,815.9 L711.5,815.5 L714.6,815.1 L717.5,814.7 L720.3,814.4 L723.0,814.1 L725.5,813.8 L728.0,813.6 L730.3,813.4 L732.6,813.2 L734.9,813.0 L737.1,812.8 L739.3,812.6 L741.5,812.4 L743.6,812.3 L745.8,812.1 L748.1,811.9 L750.4,811.7 L752.7,811.5 L755.1,811.3 L757.7,811.1 L760.3,810.9 L763.0,810.6 L765.7,810.4 L768.4,810.1 L771.2,809.9 L774.0,809.6 L776.7,809.4 L779.5,809.1 L782.3,808.9 L785.1,808.6 L787.9,808.4 L790.7,808.1 L793.5,807.9 L796.2,807.7 L799.0,807.5 L801.7,807.2 L804.5,807.0 L807.2,806.8 L809.9,806.7 L812.6,806.5 L815.2,806.3 L817.8,806.2 L820.4,806.0 L822.9,805.9 L825.4,805.8 L827.9,805.7 L830.4,805.6 L832.8,805.6 L835.2,805.5 L837.6,805.5 L840.0,805.5 L842.3,805.4 L844.7,805.4 L847.0,805.4 L849.3,805.5 L851.6,805.5 L853.9,805.5 L856.2,805.5 L858.4,805.6 L860.6,805.6 L862.8,805.7 L865.0,805.7 L867.2,805.8 L869.4,805.8 L871.5,805.9 L873.7,805.9 L875.8,805.9 L877.9,806.0 L879.9,806.0 L882.0,806.0 L884.0,806.1 L886.0,806.1 L887.9,806.1 L889.9,806.2 L891.8,806.2 L893.6,806.3 L895.5,806.3 L897.3,806.3 L899.2,806.4 L901.0,806.4 L902.8,806.5 L904.6,806.5 L906.4,806.6 L908.2,806.6 L909.9,806.7 L911.7,806.7 L913.5,806.8 L915.3,806.9 L917.1,806.9 L918.9,807.0 L920.7,807.0 L922.6,807.1 L924.4,807.1 L924.6,800.9 L922.7,800.8 L920.9,800.8 L919.1,800.7 L917.3,800.7 L915.5,800.6 L913.7,800.6 L911.9,800.5 L910.1,800.4 L908.4,800.4 L906.6,800.3 L904.8,800.3 L903.0,800.2 L901.2,800.1 L899.4,800.1 L897.5,800.0 L895.7,800.0 L893.8,799.9 L891.9,799.9 L890.0,799.8 L888.1,799.8 L886.1,799.7 L884.1,799.7 L882.1,799.6 L880.1,799.6 L878.0,799.6 L875.9,799.5 L873.8,799.5 L871.7,799.4 L869.5,799.4 L867.4,799.3 L865.2,799.3 L863.0,799.2 L860.8,799.2 L858.5,799.1 L856.3,799.1 L854.0,799.0 L851.7,799.0 L849.4,798.9 L847.1,798.9 L844.7,798.9 L842.3,798.9 L839.9,798.9 L837.5,798.9 L835.1,799.0 L832.6,799.0 L830.2,799.0 L827.7,799.1 L825.2,799.2 L822.6,799.3 L820.1,799.4 L817.5,799.6 L814.8,799.7 L812.1,799.9 L809.5,800.0 L806.7,800.2 L804.0,800.4 L801.2,800.6 L798.5,800.8 L795.7,801.0 L792.9,801.2 L790.1,801.5 L787.3,801.7 L784.5,801.9 L781.7,802.2 L778.9,802.4 L776.1,802.7 L773.3,802.9 L770.6,803.1 L767.8,803.4 L765.1,803.6 L762.4,803.9 L759.7,804.1 L757.1,804.3 L754.6,804.5 L752.2,804.7 L749.8,804.9 L747.6,805.1 L745.3,805.3 L743.1,805.4 L740.9,805.6 L738.7,805.8 L736.5,805.9 L734.3,806.1 L732.0,806.3 L729.7,806.5 L727.3,806.7 L724.8,807.0 L722.2,807.2 L719.6,807.5 L716.7,807.8 L713.8,808.2 L710.6,808.6 L707.3,809.0 L703.9,809.5 L700.2,810.0 L696.3,810.5 L692.1,811.1 L687.7,811.8 L683.1,812.5 L678.2,813.3 L673.1,814.1 L667.8,814.9 L662.3,815.8 L656.8,816.7 L651.1,817.7 L645.3,818.6 L639.5,819.6 L633.6,820.6 L627.7,821.6 L621.8,822.6 L615.9,823.6 L610.0,824.6 L604.3,825.6 L598.6,826.5 L593.0,827.5 L587.6,828.4 L582.4,829.3 L577.3,830.2 L572.4,831.0 L567.8,831.9 L563.3,832.6 L558.8,833.4 L554.4,834.2 L550.1,835.0 L545.8,835.8 L541.6,836.6 L537.5,837.3 L533.4,838.1 L529.4,838.8 L525.5,839.6 L521.6,840.3 L517.9,841.0 L514.2,841.8 L510.6,842.4 L507.0,843.1 L503.6,843.8 L500.2,844.4 L496.9,845.0 L493.8,845.6 L490.7,846.2 L487.7,846.7 L484.8,847.2 L482.1,847.7 L479.4,848.2 L476.9,848.6 L474.5,848.9 L472.3,849.3 L470.2,849.6 L468.3,849.9 L466.5,850.1 L464.8,850.4 L463.2,850.6 L461.7,850.7 L460.3,850.9 L458.9,851.1 L457.6,851.2 L456.3,851.3 L455.0,851.5 L453.8,851.6 L452.6,851.7 L451.3,851.8 L450.0,851.9 L448.7,852.1 L447.4,852.2 L446.0,852.4 L444.6,852.5 L443.0,852.7 L441.4,852.9 L439.8,853.1 L438.1,853.4 L436.5,853.6 L434.8,853.8 L433.1,854.0 L431.5,854.3 L429.8,854.5 L428.1,854.7 L426.4,855.0 L424.7,855.2 L423.0,855.4 L421.3,855.7 L419.6,855.9 L417.9,856.1 L416.2,856.4 L414.5,856.6 L412.8,856.8 L411.2,857.1 L409.5,857.3 L407.8,857.5 L406.1,857.7 L404.4,858.0 L402.7,858.2 L401.0,858.4 L399.4,858.6 L397.7,858.8 L396.0,859.0 L394.3,859.2 L392.6,859.4 L391.0,859.6 L389.3,859.8 L387.6,860.0 L385.9,860.2 L384.2,860.3 L382.6,860.5 L380.9,860.7 L379.2,860.9 L377.5,861.1 L375.8,861.3 L374.2,861.5 L372.5,861.7 L370.8,861.8 L369.1,862.0 L367.4,862.2 L365.7,862.4 L364.0,862.6 L362.4,862.8 L360.7,863.0 L359.0,863.2 L357.3,863.4 L355.6,863.6 L353.9,863.8 L352.2,864.0 L350.5,864.2 L348.9,864.4 L347.2,864.6 L345.5,864.8 L343.8,865.0 L342.1,865.2 L340.4,865.4 L338.8,865.6 L337.1,865.8 L335.4,866.0 L333.7,866.2 L332.0,866.4 L330.4,866.6 L328.7,866.8 L327.0,866.9 L325.3,867.1 L323.7,867.3 L322.0,867.5 L320.3,867.6 L318.7,867.8 L317.0,867.9 L315.3,868.1 L313.6,868.2 L311.9,868.4 L310.3,868.5 L308.6,868.7 L306.9,868.8 L305.2,869.0 L303.6,869.1 L301.9,869.3 L300.2,869.4 L298.6,869.5 L296.9,869.6 L295.2,869.8 L293.6,869.9 L291.9,870.0 L290.3,870.1 L288.6,870.1 L286.9,870.2 L285.3,870.3 L283.6,870.3 L282.0,870.4 L280.3,870.4 L278.7,870.4 L276.9,870.4 L275.2,870.4 L273.5,870.4 L271.7,870.4 L269.9,870.3 L268.1,870.3 L266.3,870.2 L264.4,870.2 L262.6,870.1 L260.8,870.0 L259.0,869.9 L257.3,869.8 L255.5,869.8 L253.8,869.7 L252.1,869.6 L250.5,869.5 L248.9,869.4 L247.3,869.2 L245.8,869.1 L244.3,869.0 L242.9,868.9 L241.6,868.8 L240.3,868.7 L239.2,868.6 L238.1,868.5 L237.1,868.4 L236.1,868.2 L235.2,868.1 L234.4,868.0 L233.6,867.9 L232.8,867.7 L232.1,867.6 L231.4,867.5 L230.7,867.3 L230.1,867.2 L229.4,867.0 L228.8,866.9 L228.2,866.7 L227.5,866.6 L226.9,866.4 L226.2,866.3 L225.6,866.1 L224.8,865.9 L224.1,865.8 L223.3,865.6 L222.5,865.4 L221.7,865.3 L220.9,865.1 L220.1,865.0 L219.2,864.8 L218.4,864.7 L217.6,864.5 L216.7,864.4 L215.9,864.2 L215.1,864.1 L214.2,863.9 L213.4,863.8 L212.5,863.6 L211.7,863.4 L210.9,863.3 L210.0,863.1 L209.2,863.0 L208.3,862.8 L207.5,862.6 L206.7,862.5 L205.8,862.3 L205.0,862.1 L204.2,861.9 L203.3,861.8 L202.5,861.6 L201.7,861.4 L200.9,861.2 L200.0,861.0 L199.2,860.8 L198.4,860.7 L197.5,860.5 L196.7,860.3 L195.9,860.1 L195.1,859.9 L194.2,859.7 L193.4,859.5 L192.6,859.3 L191.8,859.1 L191.0,858.9 L190.1,858.7 L189.3,858.5 L188.5,858.2 L187.7,858.0 L186.9,857.8 L186.0,857.6 L185.2,857.3 L184.4,857.1 L183.6,856.9 L182.8,856.6 L182.0,856.4 L181.1,856.2 L180.3,855.9 L179.5,855.7 L178.7,855.4 L177.8,855.1 L177.0,854.9 L176.2,854.6 L175.4,854.3 L174.5,854.1 L173.7,853.8 L172.9,853.5 L172.1,853.2 L171.2,853.0 L170.4,852.7 L169.6,852.4 L168.8,852.1 L167.9,851.8 L167.1,851.5 L166.3,851.2 L165.4,850.9 L164.6,850.6 L163.8,850.3 L163.0,849.9 L162.1,849.6 L161.3,849.3 L160.5,849.0 L159.6,848.6 L158.8,848.3 L157.9,848.0 L157.1,847.6 L156.2,847.3 L155.4,847.0 L154.6,846.6 L153.7,846.3 L152.9,845.9 L152.1,845.6 L151.2,845.2 L150.4,844.8 L149.6,844.5 L148.8,844.1 L147.9,843.7 L147.1,843.4 L146.3,843.0 L145.5,842.6 L144.7,842.2 L144.0,841.8 L143.2,841.4 L142.4,841.0 L141.6,840.6 L140.9,840.2 L140.1,839.8 L139.3,839.4 L138.6,839.0 L137.8,838.6 L137.0,838.1 L136.3,837.7 L135.5,837.3 L134.8,836.8 L134.0,836.4 L133.3,836.0 L132.6,835.5 L131.9,835.1 L131.1,834.6 L130.4,834.1 L129.7,833.7 L129.0,833.2 L128.3,832.7 L127.6,832.2 L126.9,831.8 L126.2,831.3 L125.5,830.8 L124.8,830.3 L124.2,829.7 L123.5,829.2 L122.8,828.7 L122.2,828.2 L121.5,827.7 L120.9,827.1 L120.2,826.6 L119.6,826.1 L118.9,825.5 L118.3,825.0 L117.7,824.4 L117.1,823.8 L116.4,823.3 L115.8,822.7 L115.2,822.1 L114.6,821.5 L114.0,820.9 L113.3,820.3 L112.7,819.7 L112.1,819.0 L111.5,818.4 L110.9,817.7 L110.2,817.1 L109.6,816.4 L109.0,815.7 L108.3,815.0 L107.7,814.3 L107.0,813.5 L106.4,812.8 L105.7,812.0 L105.1,811.3 L104.4,810.5 L103.8,809.7 L103.1,808.9 L102.4,808.1 L101.8,807.3 L101.2,806.5 L100.5,805.6 L99.9,804.8 L99.3,804.0 L98.6,803.2 L98.0,802.4 L97.4,801.5 L96.9,800.7 L96.3,799.9 L95.7,799.1 L95.2,798.3 L94.7,797.5 L94.2,796.8 L93.6,796.0 L93.2,795.2 L92.7,794.4 L92.2,793.6 L91.7,792.8 L91.3,792.0 L90.8,791.1 L90.3,790.3 L89.9,789.5 L89.5,788.7 L89.0,787.9 L88.6,787.0 L88.2,786.2 L87.8,785.4 L87.4,784.6 L87.0,783.8 L86.6,783.0 L86.2,782.1 L85.8,781.3 L85.4,780.5 L85.0,779.7 L84.7,778.9 L84.3,778.2 L83.9,777.4 L83.6,776.6 L83.3,775.9 L82.9,775.1 L82.6,774.3 L82.3,773.5 L82.0,772.8 L81.7,772.0 L81.4,771.2 L81.1,770.5 L80.8,769.7 L80.5,768.9 L80.2,768.2 L79.9,767.4 L79.6,766.7 L79.4,766.0 L79.1,765.3 L78.9,764.6 L78.6,763.9 L78.4,763.2 L78.1,762.5 L77.9,761.8 L77.7,761.2 L77.5,760.5 L77.2,759.9 L77.0,759.4 L76.9,758.8 L76.7,758.3 L76.5,757.8 L76.3,757.3 L76.2,756.8 L76.0,756.3 L75.9,755.9 L75.7,755.4 L75.6,755.0 L75.5,754.6 L75.4,754.2 L75.2,753.7 L75.1,753.3 L75.0,752.9 L74.9,752.4 L74.8,752.0 L74.7,751.5 L74.6,751.1 L74.4,750.6 L74.3,750.1 L74.2,749.6 L74.1,749.0 L74.0,748.5 L73.9,748.0 L73.7,747.4 L73.6,746.8 L73.5,746.2 L73.4,745.7 L73.3,745.1 L73.2,744.5 L73.1,743.8 L72.9,743.2 L72.8,742.6 L72.7,742.0 L72.6,741.4 L72.5,740.7 L72.4,740.1 L72.3,739.5 L72.2,738.8 L72.1,738.2 L72.0,737.6 L72.0,736.9 L71.9,736.3 L71.8,735.7 L71.7,735.1 L71.6,734.4 L71.5,733.8 L71.5,733.2 L71.4,732.7 L71.3,732.1 L71.2,731.6 L71.2,731.1 L71.1,730.6 L71.0,730.1 L71.0,729.5 L70.9,729.0 L70.9,728.5 L70.8,728.0 L70.8,727.5 L70.7,726.9 L70.7,726.4 L70.6,725.8 L70.6,725.1 L70.5,724.5 L70.5,723.8 L70.4,723.1 L70.3,722.3 L70.3,721.5 L70.2,720.7 L70.2,719.8 L70.1,718.8 L70.1,717.8 L70.0,716.8 L69.9,715.7 L69.9,714.6 L69.8,713.5 L69.8,712.3 L69.7,711.1 L69.6,709.9 L69.6,708.6 L69.5,707.4 L69.4,706.1 L69.4,704.8 L69.3,703.5 L69.3,702.1 L69.2,700.8 L69.2,699.5 L69.1,698.1 L69.1,696.8 L69.1,695.4 L69.0,694.1 L69.0,692.7 L69.0,691.4 L69.0,690.0 L69.0,688.7 L69.0,687.3 L69.1,685.9 L69.1,684.5 L69.1,683.0 L69.1,681.6 L69.2,680.1 L69.2,678.6 L69.3,677.1 L69.3,675.6 L69.4,674.1 L69.4,672.6 L69.5,671.1 L69.6,669.6 L69.6,668.1 L69.7,666.6 L69.8,665.1 L69.9,663.7 L70.0,662.2 L70.1,660.8 L70.2,659.4 L70.3,658.0 L70.4,656.7 L70.5,655.3 L70.6,654.1 L70.7,652.8 L70.8,651.5 L71.0,650.3 L71.1,649.1 L71.3,647.8 L71.4,646.6 L71.6,645.4 L71.7,644.3 L71.9,643.1 L72.1,641.9 L72.2,640.7 L72.4,639.6 L72.6,638.4 L72.8,637.2 L73.0,636.1 L73.1,634.9 L73.3,633.7 L73.5,632.6 L73.7,631.4 L73.9,630.2 L74.0,629.0 L74.2,627.8 L74.4,626.6 Z"/><circle cx="70.2" cy="626.0" r="4.2"/><circle cx="924.5" cy="804.0" r="3.1"/>
</g>
</svg>

</body>
</html>
